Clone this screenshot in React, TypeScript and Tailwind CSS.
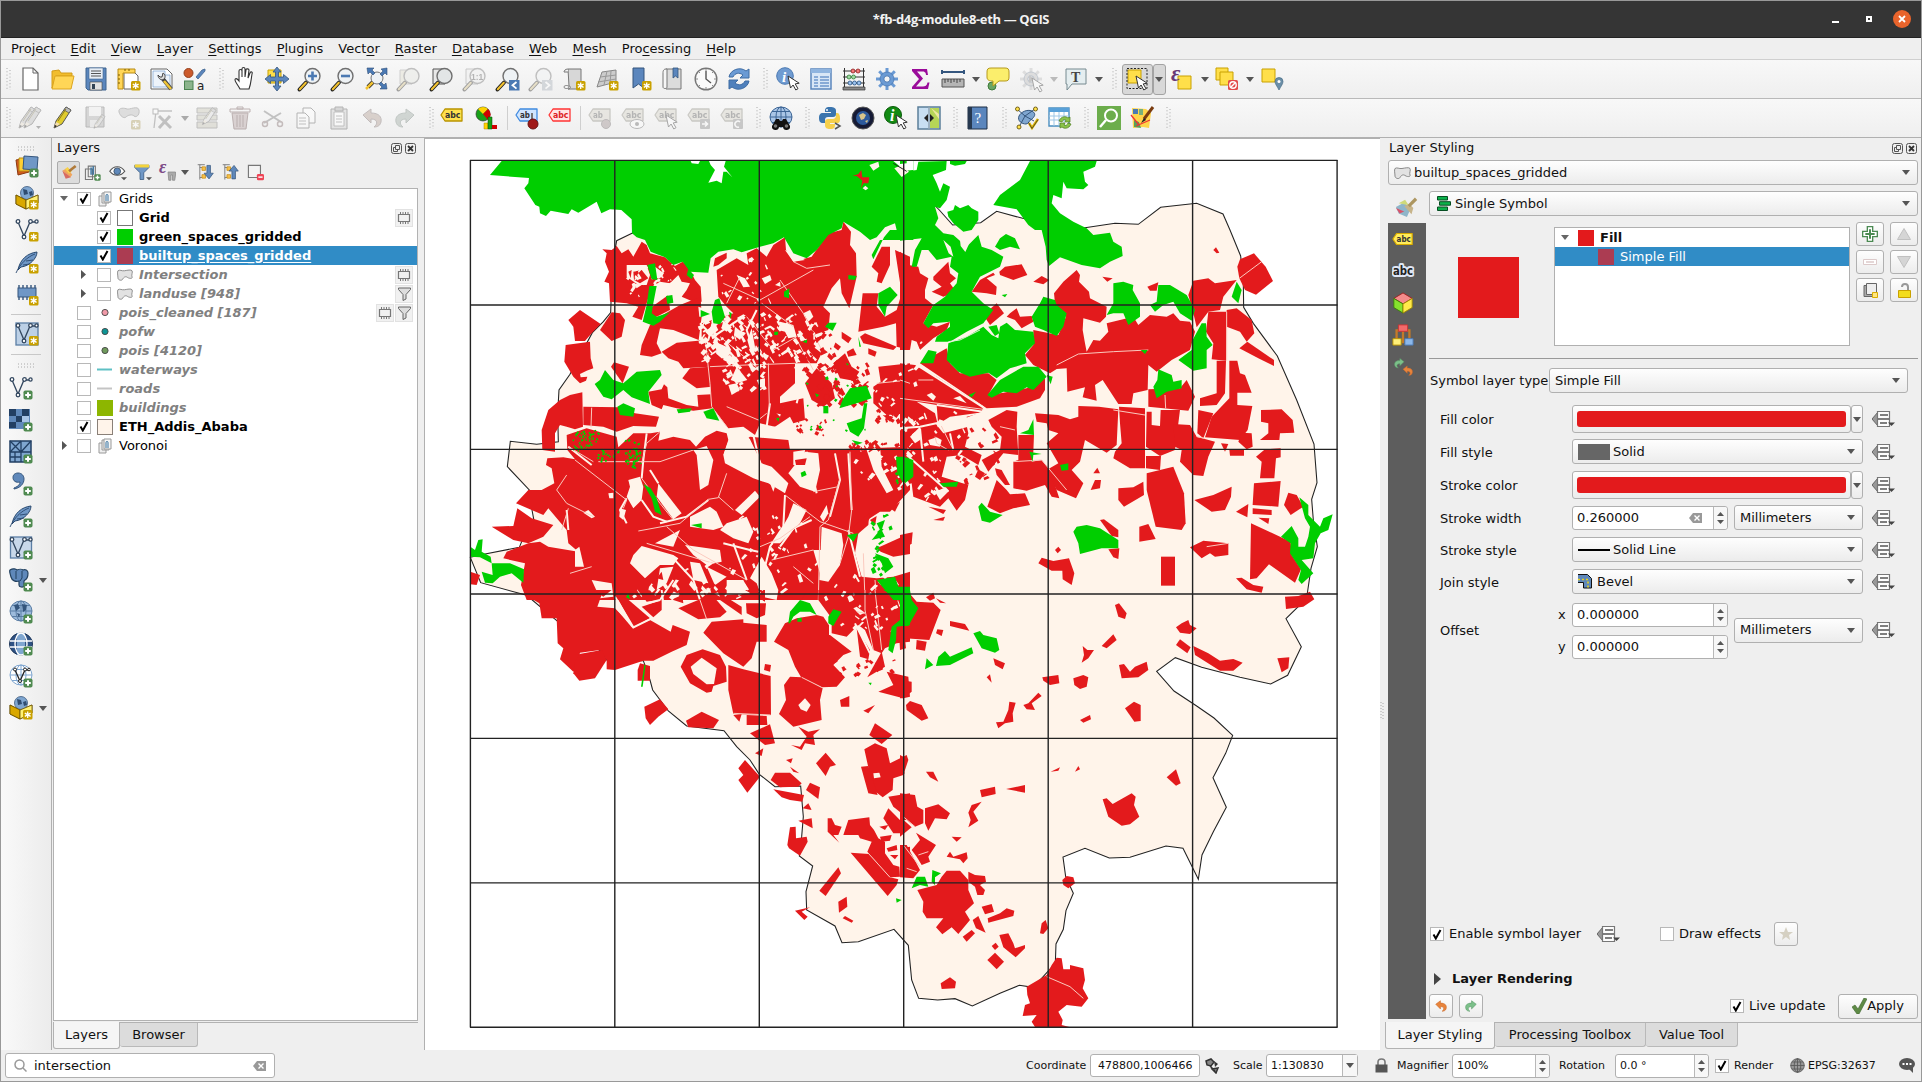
import React from "react";

type Kids = { children?: React.ReactNode };

/* ---------- shared drawing helpers ---------- */

function Ic({ children, s = 24, vb = "0 0 24 24", dim }: Kids & { s?: number; vb?: string; dim?: boolean }) {
  return (
    <svg width={s} height={s} viewBox={vb} fill="none" className={dim ? "shrink-0 overflow-visible opacity-40 grayscale-[60%]" : "shrink-0 overflow-visible"}>
      {children}
    </svg>
  );
}

const NewBadge = () => (
  <g>
    <rect x="14" y="14" width="9.5" height="9.5" rx="1.5" fill="#c9a100" />
    <path d="M18.7 15.5v6.5M15.8 17.1l5.8 3.3M15.8 20.4l5.8-3.3" stroke="#fff" strokeWidth="1.3" />
  </g>
);
const PlusBadge = () => (
  <g>
    <rect x="14.5" y="14.5" width="9" height="9" rx="1.8" fill="#4f8a50" />
    <path d="M19 16.2v5.6M16.2 19h5.6" stroke="#fff" strokeWidth="2" />
  </g>
);
const Cursor = ({ x = 12, y = 9 }: { x?: number; y?: number }) => (
  <path transform={`translate(${x} ${y})`} d="M0 0l2.500 12 2.600-3 2.700 5 2.200-1.300-2.800-4.800 4-.700z" fill="#fff" stroke="#333" strokeWidth="1" />
);
const Lens = ({ fill = "#eef2f5" }: { fill?: string }) => (
  <g>
    <path d="M1.500 22.500l6.500-7" stroke="#222" strokeWidth="4" strokeLinecap="round" />
    <path d="M1.800 22.200l6-6.400" stroke="#f2c230" strokeWidth="2" strokeLinecap="round" />
    <circle cx="14.5" cy="9" r="7.5" fill={fill} stroke="#6f6f6f" strokeWidth="1.4" />
  </g>
);
const Feather = () => (
  <g>
    <path d="M3 20C5 9 13 3 22 2c0 6-7 14-16 15z" fill="#6f97c6" stroke="#2b4a6f" />
    <path d="M1 23C5 14 12 7 20 4M8 15l7-1M11 11l7-1" stroke="#2b4a6f" strokeWidth=".9" />
  </g>
);
const VNodes = () => (
  <g stroke="#33475f" strokeWidth="1.3">
    <path d="M3 4l6 14L15 4h6" />
    <g fill="#fff">
      <circle cx="3" cy="3.5" r="1.8" /><circle cx="9" cy="19" r="1.8" /><circle cx="15.5" cy="3.5" r="1.8" /><circle cx="21.5" cy="3.5" r="1.6" />
    </g>
  </g>
);
const Globe = ({ f = "#a9c5e6", l = "#3c6595" }: { f?: string; l?: string }) => (
  <g stroke={l} strokeWidth="1">
    <ellipse cx="12" cy="11" rx="11" ry="10" fill={f} />
    <ellipse cx="12" cy="11" rx="5" ry="10" /><path d="M1 11h22M3 5.500h18M3 16.500h18M12 1v20" />
  </g>
);
const Box = () => (
  <g stroke="#6b5200" strokeWidth=".8">
    <path d="M1 9l10 5 12-5v8l-12 6L1 18z" fill="#d9a800" />
    <circle cx="12" cy="7" r="6.5" fill="#7fa6d0" stroke="#3c5a7d" />
    <path d="M8 3l4 1 1 4-4 1zM14 6l3-1 1 4-3 1z" fill="#2f4c70" stroke="none" />
    <path d="M1 9l10 5v9L1 18z" fill="#d9a800" /><path d="M23 9l-12 5v9l12-6z" fill="#fff176" />
  </g>
);
const Tag = ({ f, s, t = "#333", txt = "abc" }: { f: string; s: string; t?: string; txt?: string }) => (
  <g>
    <path d="M1 9l4-6h17v12H5z" fill={f} stroke={s} strokeWidth="1.3" strokeLinejoin="round" />
    <text x="5" y="12" fontSize="9" fontWeight="700" fill={t} fontFamily="DejaVu Sans" textLength={txt.length === 2 ? 10 : 15.5} lengthAdjust="spacingAndGlyphs">{txt}</text>
  </g>
);
const Page = () => <path d="M5 1h10l5 5v17H5z" fill="#fff" stroke="#666" strokeWidth="1.2" />;
const Pencil = ({ f = "#e0cb2e" }: { f?: string }) => (
  <g><path d="M3 22l2-7L15 1l5 3-9 14z" fill={f} stroke="#555" /><path d="M15 1l5 3-2 3-5-3z" fill="#bbb" stroke="#555" strokeWidth=".7" /><path d="M3 22l2-6 4 2z" fill="#f5dfb0" /><path d="M3 22l1-3 2 1z" fill="#222" /><path d="M7 15l8-12" stroke="#8d7b1c" /></g>
);
const Gear = ({ f = "#6a9ad4" }: { f?: string }) => (
  <g>
    <g stroke={f} strokeWidth="3"><path d="M12 1v22M1 12h22M4.200 4.200l15.600 15.600M19.800 4.200L4.200 19.800" /></g>
    <circle cx="12" cy="12" r="7" fill={f} stroke="#4a79b3" strokeWidth=".8" /><circle cx="12" cy="12" r="3.2" fill="#f4f4f4" stroke="#4a79b3" />
  </g>
);

function Arrow({ c = "#555" }: { c?: string }) {
  return <svg width="8" height="5" viewBox="0 0 8 5" className="shrink-0"><path d="M0 0h8L4 5z" fill={c} /></svg>;
}
const Cell = ({ children }: Kids) => <div className="flex h-full w-[33px] shrink-0 items-center justify-center">{children}</div>;
const Drop = ({ c }: { c?: string }) => <div className="flex h-full w-3 shrink-0 items-center justify-center"><Arrow c={c} /></div>;
const Dots = () => (
  <svg width="5" height="22" viewBox="0 0 5 22"><path d="M1 0v22M4 2v22" stroke="#aaa" strokeWidth="1" strokeDasharray="1 2.3" /></svg>
);
const Handle = () => <div className="flex h-full w-4 shrink-0 items-center justify-center pl-1"><Dots /></div>;
const VSep = () => <div className="mx-[3px] h-6 w-px shrink-0 bg-[#cfcfcf]" />;

/* ---------- toolbars ---------- */

function TopBar() {
  return (
    <div className="flex h-[39px] shrink-0 items-center border-b border-[#b9b9b9] bg-gradient-to-b from-[#f8f8f8] to-[#efefef]">
      <div className="flex h-full w-[12.5px] items-center pl-[5px]"><Dots /></div>
      <Cell><Ic><Page /><path d="M15 1v5h5" stroke="#666" /></Ic></Cell>
      <Cell><Ic><path d="M1 4l7-1 2 3h11v3H5l-4 12z" fill="#f1bd2d" stroke="#d39c1a" /><path d="M4 9h19l-3 13H1z" fill="#ffd657" stroke="#dca51f" /></Ic></Cell>
      <Cell><Ic><path d="M2 1h20v22H4l-2-2z" fill="#5b86bd" stroke="#3f6590" /><path d="M5 1h14v11H5z" fill="#e8eef5" stroke="#3f6590" strokeWidth=".6" /><path d="M7 4h10M7 6.500h10M7 9h10" stroke="#555" /><path d="M6 15h12v8H6z" fill="#e3e3e3" stroke="#444" strokeWidth=".6" /><path d="M8 17h3v5H8z" fill="#345" /></Ic></Cell>
      <Cell><Ic><path d="M7 5h10l4 4v13H7z" fill="#fff" stroke="#666" /><path d="M1 2h17v4H6v16H1z" fill="#ffd657" stroke="#b98b12" /><path d="M1 8h2M1 12h2M1 16h2M8 2v2M12 2v2" stroke="#7a5b00" /><NewBadge /></Ic></Cell>
      <Cell><Ic><path d="M1 2h16l5 5v15H1z" fill="#fff" stroke="#666" /><path d="M3 4h12v4h5v12H3z" fill="#edf3fa" stroke="#7aa2d0" strokeWidth=".7" /><path d="M13 12l8 10" stroke="#444" strokeWidth="4" /><path d="M14 14l7 8" stroke="#f0c534" strokeWidth="2.500" /><path d="M8 8c0 4 4 6 6 4s1-5-1-6l-1 4-2 0z" fill="#ddd" stroke="#444" /></Ic></Cell>
      <Cell><Ic><circle cx="5.500" cy="6" r="4.500" fill="#cc5a2b" stroke="#96401c" /><path d="M22 2l-3 1-6 7 2 2 7-8z" fill="#5b86bd" stroke="#3f6590" strokeWidth=".8" /><rect x="1.500" y="14" width="8.500" height="8.500" fill="#8cb48c" stroke="#4b8350" /><text x="14" y="22.500" fontSize="12" fill="#222" fontFamily="DejaVu Sans">a</text></Ic></Cell>
      <Handle />
      <Cell><Ic><path d="M8 22C6 18 3 15 3 13c0-2 2-2 4 1V4c0-2 3-2 3 0v6-8c0-2 3-2 3 0v8l1-7c0-2 3-1 3 0l-1 8 2-5c1-2 3-1 2 1-1 6-1 10-3 15z" fill="#fff" stroke="#333" strokeWidth="1.1" /></Ic></Cell>
      <Cell><Ic><path d="M3 3h13v13H3z" fill="#ffdf4a" stroke="#c9a100" /><path d="M12 0l4 5h-2.500v5h5V7.500L24 12l-5.500 4.500V14h-5v5H16l-4 5-4-5h2.500v-5h-5v2.500L0 12l5.500-4.500V10h5V5H8z" fill="#5b86bd" stroke="#34557c" strokeWidth=".8" /></Ic></Cell>
      <Cell><Ic><Lens /><path d="M14.500 4.500v9M10 9h9" stroke="#4a79b3" strokeWidth="2.600" /></Ic></Cell>
      <Cell><Ic><Lens /><path d="M10 9h9" stroke="#4a79b3" strokeWidth="2.600" /></Ic></Cell>
      <Cell><Ic><path d="M4 20l6-6" stroke="#222" strokeWidth="4" /><path d="M2 22l7-7" stroke="#f2c230" strokeWidth="2.500" /><circle cx="13" cy="11" r="6" fill="#eef2f5" stroke="#777" /><path d="M3 1h7L8 3l3 3-2 2-3-3-2 2zM23 1v7l-2-2-3 3-2-2 3-3-2-2zM23 22h-7l2-2-3-3 2-2 3 3 2-2z" fill="#4a79b3" stroke="#2f4f78" strokeWidth=".6" /></Ic></Cell>
      <Cell><Ic dim><path d="M3 3h12v14H3z" fill="#e5dfb0" stroke="#999" /><Lens fill="#e6e8d9" /></Ic></Cell>
      <Cell><Ic><path d="M3 2h12v15H3z" fill="#e8e8e8" stroke="#555" /><Lens fill="#e2e5e6" /></Ic></Cell>
      <Cell><Ic dim><path d="M3 2h12v15H3z" fill="#eee" stroke="#888" /><Lens fill="#eee" /><text x="8" y="12.500" fontSize="8.500" fontWeight="700" fill="#555" fontFamily="Liberation Sans">1:1</text></Ic></Cell>
      <Cell><Ic><Lens /><rect x="13" y="13" width="10.500" height="10.500" fill="#4a79b3" /><path d="M20.500 15l-4 3.300 4 3.300" stroke="#fff" strokeWidth="1.800" /></Ic></Cell>
      <Cell><Ic dim><Lens /><rect x="13" y="13" width="10.500" height="10.500" fill="#9db0c8" /><path d="M16.500 15l4 3.300-4 3.300" stroke="#fff" strokeWidth="1.800" /></Ic></Cell>
      <Cell><Ic><path d="M6 2h13v20H6c3 0 3-3 1-3z" fill="#d7d7d7" stroke="#777" /><path d="M6 2c-3 0-4 2-4 3h4M2 20c0-2 5-2 5 0s-5 2-5 0z" fill="#f4f4f4" stroke="#777" /><NewBadge /></Ic></Cell>
      <Cell><Ic><path d="M7 5l14-2v12L2 20z" fill="#ccc" stroke="#888" /><path d="M5 10l16-2M3 15l18-3M12 4l-3 14M16 4l-1 13" stroke="#999" /><NewBadge /></Ic></Cell>
      <Cell><Ic><path d="M5 1h11v20l-5.500-4L5 21z" fill="#5b86bd" stroke="#34557c" /><NewBadge /></Ic></Cell>
      <Cell><Ic><path d="M5 2h15v20H5z" fill="#dcdcdc" stroke="#777" /><path d="M5 2c-3 0-3 3-3 4v14c0 2 4 2 4 0V2z" fill="#f6f6f6" stroke="#777" /><path d="M12 1h5v10l-2.500-2L12 11z" fill="#5b86bd" stroke="#34557c" strokeWidth=".8" /></Ic></Cell>
      <Cell><Ic><circle cx="12" cy="12" r="10.800" fill="#fafafa" stroke="#777" strokeWidth="1.400" /><path d="M12 4v8l5 4" stroke="#555" strokeWidth="1.400" /><path d="M12 2v2M12 20v2M2 12h2M20 12h2M5 5l1 1M18 18l1 1M5 19l1-1M18 6l1-1" stroke="#888" /></Ic></Cell>
      <Cell><Ic><path d="M2 10C3 3 13-1 19 4l3-2v9h-9l3-3C12 5 8 6 6 10z" fill="#6a9ad4" stroke="#3f6ca3" /><path d="M22 14c-1 7-11 11-17 6l-3 2v-9h9l-3 3c4 3 8 2 10-2z" fill="#4f80bc" stroke="#3f6ca3" /></Ic></Cell>
      <Handle />
      <Cell><Ic><circle cx="9" cy="9" r="8.300" fill="#6f9bd1" stroke="#4a79b3" /><text x="6" y="14.500" fontSize="15" fontStyle="italic" fontWeight="700" fill="#fff" fontFamily="Liberation Serif">i</text><Cursor x={12} y={9} /></Ic></Cell>
      <Cell><Ic><path d="M2 2h20v20H2z" fill="#d8e6f6" stroke="#5b86bd" strokeWidth="1.500" /><path d="M2 2h20v4H2z" fill="#8fb4df" /><path d="M5 10h4M11 10h9M5 13h4M11 13h9M5 16h4M11 16h9M5 19h4M11 19h9" stroke="#6d97cb" strokeWidth="1.300" /></Ic></Cell>
      <Cell><Ic><path d="M2.500 1v20M21.500 1v20M1 4h22M1 10h22M1 16h22" stroke="#333" /><path d="M1 20h22v3H1z" fill="#888" stroke="#333" strokeWidth=".7" /><g stroke="#8b1a1a" fill="#f47a7a" strokeWidth=".8"><circle cx="11" cy="4" r="2" /><circle cx="16" cy="4" r="2" /></g><g stroke="#2e7d32" fill="#9fd8a2" strokeWidth=".8"><circle cx="7" cy="10" r="2" /><circle cx="11.500" cy="10" r="2" /></g><g stroke="#27507f" fill="#9cc3ef" strokeWidth=".8"><circle cx="8" cy="16" r="2" /><circle cx="12.500" cy="16" r="2" /><circle cx="17" cy="16" r="2" /></g></Ic></Cell>
      <Cell><Ic><Gear /></Ic></Cell>
      <Cell><Ic><path d="M4 2h15l1 6h-2c0-3-2-3.500-4-3.500H9l6 7-7 8h7c2 0 4-1 4.500-4h2L20 22H4v-2l7-8-7-8z" fill="#9a0b9a" /></Ic></Cell>
      <Cell><Ic><path d="M1 5h22M1 3v4M23 3v4" stroke="#35577f" strokeWidth="2" /><path d="M1 12h22v8H1z" fill="#b5b5b5" stroke="#555" /><path d="M4 12v4M7 12v3M10 12v4M13 12v3M16 12v4M19 12v3" stroke="#444" /></Ic></Cell>
      <Drop />
      <Cell><Ic><circle cx="6" cy="19" r="4" fill="#69a564" stroke="#3d7a3a" /><path d="M5 1h14c3 0 4 1 4 4v5c0 3-1 4-4 4h-6l-6 5v-5C3 14 1 13 1 10V5c0-3 1-4 4-4z" fill="#fbee6c" stroke="#b69a1c" /></Ic></Cell>
      <Cell><Ic dim><Gear f="#bbb" /><path d="M10 8l6 4-6 4z" fill="#888" /><Cursor x={13} y={11} /></Ic></Cell>
      <Drop c="#bbb" />
      <Cell><Ic><path d="M2 2h20v15H8l-5 6v-6H2z" fill="#e5eef0" stroke="#768a90" /><text x="7" y="14.500" fontSize="14" fontWeight="700" fill="#444" fontFamily="Liberation Serif">T</text></Ic></Cell>
      <Drop />
      <Handle />
      <div className="ml-px flex h-[31px] w-[31px] shrink-0 items-center justify-center rounded-[3px] border border-[#a3a3a3] bg-[#d8d8d8]"><Ic><path d="M3 3h13v13H3z" fill="#ffdf4a" stroke="#c9a100" /><path d="M2 1.500h20v20H2z" stroke="#222" strokeDasharray="2 1.500" /><Cursor x={11} y={9} /></Ic></div>
      <div className="flex h-[31px] w-[13px] shrink-0 items-center justify-center rounded-[3px] border border-[#a3a3a3] bg-[#d8d8d8]"><Arrow /></div>
      <Cell><Ic><path d="M8 9h13v13H8z" fill="#ffdf4a" stroke="#c9a100" /><text x="1" y="14" fontSize="23" fontStyle="italic" fontWeight="700" fill="#6a3a78" fontFamily="Liberation Serif">ε</text></Ic></Cell>
      <Drop />
      <Cell><Ic><path d="M1 1h12v12H1z" fill="#ffdf4a" stroke="#c9a100" /><path d="M5 5h13v13H5z" fill="#ffdf4a" stroke="#c9a100" /><rect x="13" y="13" width="10" height="10" rx="1.500" fill="#e24b4b" /><circle cx="18" cy="18" r="3.200" stroke="#fff" strokeWidth="1.400" /><path d="M16 20l4-4" stroke="#fff" strokeWidth="1.400" /></Ic></Cell>
      <Drop />
      <Cell><Ic><path d="M2 2h13v13H2z" fill="#ffdf4a" stroke="#c9a100" /><path d="M19 23c-2-4-4-6-4-8.500a4 4 0 018 0C23 17 21 19 19 23z" fill="#6b8fa8" stroke="#486b85" strokeWidth=".7" /><circle cx="19" cy="14.500" r="1.500" fill="#fff" /></Ic></Cell>
    </div>
  );
}

function EditBar() {
  const grey = { f: "#d9d2b0", s: "#8d886f", t: "#555" };
  return (
    <div className="flex h-[39px] shrink-0 items-center border-b border-[#b0b0b0] bg-gradient-to-b from-[#f8f8f8] to-[#efefef]">
      <div className="flex h-full w-[12.5px] items-center pl-[5px]"><Dots /></div>
      <Cell><Ic dim><g transform="translate(-2 0)"><Pencil f="#bbb" /></g><g transform="translate(3 0)"><Pencil f="#bbb" /></g><path d="M18 20h5l-2.500 3z" fill="#555" /></Ic></Cell>
      <Cell><Ic><Pencil /></Ic></Cell>
      <Cell><Ic dim><path d="M2 1h18v20H2z" fill="#aaa" stroke="#666" /><path d="M5 1h12v9H5z" fill="#eee" /><path d="M6 14h8v7H6z" fill="#ddd" /><g transform="translate(8 8) scale(.65)"><Pencil f="#ccc" /></g></Ic></Cell>
      <Cell><Ic dim><path d="M2 6c-1-5 6-4 8-3s11-4 12 1-3 8-5 6-6-1-8 1-6-1-7-5z" fill="#bbb" stroke="#777" /><NewBadge /></Ic></Cell>
      <Cell><Ic dim><path d="M4 22L6 5h16" stroke="#777" strokeWidth="1.300" /><rect x="3" y="3" width="5" height="5" fill="#fff" stroke="#666" /><path d="M9 10l12 12M20 10L9 22" stroke="#777" strokeWidth="3" /></Ic></Cell>
      <Drop c="#aaa" />
      <Cell><Ic dim><path d="M2 2h20v5H2zM2 9h20v5H2zM2 16h20v6H2z" fill="#c9c79b" stroke="#777" /><g transform="translate(5 1) scale(.8)"><Pencil f="#ddd" /></g></Ic></Cell>
      <Cell><Ic dim><path d="M4 7h16l-2 16H6z" fill="#c99" stroke="#844" /><path d="M2 3h20v3H2zM9 1h6v2H9zM9 9v12M12 9v12M15 9v12" stroke="#844" /></Ic></Cell>
      <Cell><Ic dim><path d="M3 5l17 11M3 17L20 7" stroke="#777" strokeWidth="2" /><circle cx="19" cy="18" r="2.500" stroke="#966" strokeWidth="1.500" /><circle cx="4" cy="18" r="2.500" stroke="#966" strokeWidth="1.500" /></Ic></Cell>
      <Cell><Ic dim><path d="M9 2h8l4 4v11H9z" fill="#fff" stroke="#555" /><path d="M3 7h8l4 4v11H3z" fill="#fff" stroke="#555" /><path d="M5 12h7M5 15h7M5 18h7" stroke="#777" /></Ic></Cell>
      <Cell><Ic dim><path d="M4 3h16v20H4z" fill="#ccc" stroke="#555" /><path d="M7 6h10v14H7z" fill="#fff" stroke="#777" /><path d="M8 1h8v4H8z" fill="#aaa" stroke="#555" /><path d="M9 10h6M9 13h6M9 16h6" stroke="#777" /></Ic></Cell>
      <Cell><Ic dim><path d="M3 9l8-6v4c8 0 11 4 10 9s-6 5-7 5c4-3 4-8-3-8v4z" fill="#c9967a" stroke="#866" /></Ic></Cell>
      <Cell><Ic dim><path d="M21 9l-8-6v4C5 7 2 11 3 16s6 5 7 5c-4-3-4-8 3-8v4z" fill="#8fae9a" stroke="#687" /></Ic></Cell>
      <Handle />
      <Cell><Ic><g transform="translate(-2 0)"><Tag f="#ffe14d" s="#b99400" /></g></Ic></Cell>
      <Cell><Ic><circle cx="8" cy="8" r="7" fill="#18a018" stroke="#333" strokeWidth=".7" /><path d="M8 8L3 3a7 7 0 0110 0z" fill="#ffd200" /><path d="M8 8l5-5a7 7 0 010 11z" fill="#d00000" /><path d="M9 17h4v6H9z" fill="#ffd200" stroke="#a80" strokeWidth=".5" /><path d="M13 11h4v12h-4z" fill="#18a018" stroke="#040" strokeWidth=".5" /><path d="M17 19h5v4h-5z" fill="#d00000" /></Ic></Cell>
      <VSep />
      <Cell><Ic><Tag f="#cfe5ff" s="#3f8ae0" txt="ab" /><path d="M17 7v9" stroke="#777" strokeWidth="2" /><circle cx="18" cy="18" r="5" fill="#a01818" stroke="#611" /></Ic></Cell>
      <Cell><Ic><Tag f="#ffe5e5" s="#f33" t="#d22" /></Ic></Cell>
      <VSep />
      <Cell><Ic dim><Tag {...grey} txt="ab" /><circle cx="18" cy="18" r="4.500" fill="#a88" stroke="#766" /></Ic></Cell>
      <Cell><Ic dim><Tag {...grey} /><ellipse cx="16" cy="18" rx="7" ry="4.500" fill="#fff" stroke="#666" /><circle cx="16" cy="18" r="2" fill="#666" /></Ic></Cell>
      <Cell><Ic dim><Tag {...grey} /><Cursor x={12} y={9} /></Ic></Cell>
      <Cell><Ic dim><Tag {...grey} /><rect x="13" y="13" width="10" height="10" rx="1" fill="#888" /><path d="M15 18h5M18 15.500l2.500 2.500-2.500 2.500" stroke="#fff" strokeWidth="1.600" /></Ic></Cell>
      <Cell><Ic dim><Tag {...grey} /><rect x="13" y="13" width="10" height="10" rx="1" fill="#888" /><path d="M20 16a3 3 0 10-1 5" stroke="#fff" strokeWidth="1.500" /></Ic></Cell>
      <Handle />
      <Cell><Ic><Globe /><path d="M7 13h3l1 2h2l1-2h3l4 7a3.500 3.500 0 01-7 1h-4a3.500 3.500 0 01-7-1z" fill="#111" /><circle cx="6.500" cy="20" r="1.800" fill="#777" /><circle cx="17.500" cy="20" r="1.800" fill="#777" /></Ic></Cell>
      <Handle />
      <Cell><Ic><path d="M12 1c-5 0-5 2-5 5h6v1H5c-3 0-4 2-4 5s1 5 4 5h2v-3c0-2 1-3 3-3h5c2 0 3-1 3-3V5c0-3-2-4-6-4z" fill="#3b75ae" /><path d="M12 23c5 0 5-2 5-5h-5v-1h7c3 0 3-2 3-5s-1-5-3-5h-1v3c0 2-2 3-3 3h-5c-2 0-3 1-3 3v3c0 3 2 4 5 4z" fill="#f6d04c" /><circle cx="9" cy="4" r="1" fill="#fff" /><path d="M17 17l5 3-5 3" stroke="#555" strokeWidth="1.500" /></Ic></Cell>
      <Cell><Ic><circle cx="12" cy="12" r="11" fill="#151a35" stroke="#555" /><circle cx="12" cy="12" r="7" fill="#2d5a9c" /><path d="M8 9l4-2 3 2-2 4-3 1zM14 15l3-1-1 3z" fill="#d9c68c" /></Ic></Cell>
      <Cell><Ic><circle cx="9" cy="9" r="8.500" fill="#128a12" stroke="#0a5c0a" /><text x="6" y="15" fontSize="16" fontStyle="italic" fontWeight="700" fill="#fff" fontFamily="Liberation Serif">i</text><Cursor x={12} y={9} /></Ic></Cell>
      <Cell><Ic><path d="M1 1h22v22H1z" fill="#c8dff2" stroke="#5b7f99" strokeWidth="1.500" /><path d="M13 2h9v20h-9z" fill="#b6d557" /><path d="M14 2l8 6v5z" fill="#eee8a0" /><path d="M12 1v22" stroke="#8fa3b2" strokeWidth="1.500" /><path d="M7 12l4-4v8zM17 12l-4-4v8z" fill="#222" /></Ic></Cell>
      <Handle />
      <Cell><Ic><path d="M2 1h19v22H2z" fill="#5b86bd" stroke="#1e2f45" /><path d="M2 1h4v22H2z" fill="#26384f" /><text x="8.500" y="17" fontSize="15" fill="#fff" fontFamily="Liberation Serif">?</text></Ic></Cell>
      <Handle />
      <Cell><Ic><path d="M4 10c2-4 8-7 13-5 5 3 2 6 0 8-3 1-3 5-6 5-4 0-9-3-7-8z" fill="#7fa6d0" stroke="#34557c" /><path d="M2 3l8 7L20 3M4 21l6-11 9 5" stroke="#34557c" /><g fill="#ffe14d" stroke="#554400" strokeWidth=".8"><circle cx="2.500" cy="3" r="2" /><circle cx="20.500" cy="3" r="2" /><circle cx="4" cy="21" r="2" /></g><path d="M14 17l3 5 6-9" stroke="#e0b800" strokeWidth="2.500" /><path d="M13.500 16.500l3.500 6 6-9" stroke="#333" strokeWidth=".8" /></Ic></Cell>
      <Cell><Ic><path d="M1 2h20v18H1z" fill="#fff" stroke="#4a8ec0" strokeWidth="1.400" /><path d="M1 2h20v4H1z" fill="#58a0d8" /><path d="M1 10h20M1 14h20M6 6v14M11 6v14M16 6v14" stroke="#9dc6e6" /><path d="M11 15c2-5 7-5 9-3l2-1v5h-5l1-2c-2-1-3 0-4 2zM23 18c-2 5-7 5-9 3l-2 1v-5h5l-1 2c2 1 3 0 4-2z" fill="#8bc34a" stroke="#4c7d1c" strokeWidth=".7" /></Ic></Cell>
      <Handle />
      <Cell><Ic><path d="M0 0h24v24H0z" fill="#6cad4c" /><circle cx="14" cy="9.500" r="6" stroke="#fff" strokeWidth="2" /><path d="M3 21l6-7" stroke="#fff" strokeWidth="2.400" /></Ic></Cell>
      <Cell><Ic><path d="M2 2l14 1 5 4-2 15-6-1-10 1z" fill="#ffd54a" /><path d="M3 3h5v5H3z" fill="#4a79b3" /><path d="M4 14l5 2 2 6-7-1z" fill="#58a05a" /><path d="M9 3h4v6H9z" fill="#78b07a" /><path d="M1 9l8 10M6 20l14-6" stroke="#e33" strokeWidth="1.300" /><path d="M23 1l-9 12" stroke="#7a3c10" strokeWidth="3" /><path d="M14 12l-3 5 5-3z" fill="#222" /></Ic></Cell>
      <Handle />
    </div>
  );
}

const SideCell = ({ children, more }: Kids & { more?: boolean }) => (
  <div className="flex h-8 shrink-0 items-center">
    <div className="ml-[8px] flex w-6 justify-center">{children}</div>
    {more && <div className="ml-[6px]"><Arrow /></div>}
  </div>
);
const HDots = () => <svg width="17" height="5" viewBox="0 0 17 5"><path d="M0 1h17M0 4h17" stroke="#aaa" strokeDasharray="1 2" /></svg>;

function SideBar() {
  return (
    <div className="flex w-[51px] shrink-0 flex-col border-r border-[#b0b0b0] bg-gradient-to-r from-[#f9f9f9] to-[#ececec]">
      <div className="flex h-[12px] items-center justify-center pt-2"><HDots /></div>
      <div className="pl-[6px]">
        <SideCell><Ic><path d="M1 6l11-2 2 14-11 3z" fill="#cf5a1c" stroke="#8c3a10" /><path d="M4 4h13v13H4z" fill="#ffcf33" stroke="#b98b12" /><path d="M9 2l14 1-1 13-14-1z" fill="#6f97c6" stroke="#34557c" /><PlusBadge /></Ic></SideCell>
        <SideCell><Ic><Box /><NewBadge /></Ic></SideCell>
        <SideCell><Ic><VNodes /><NewBadge /></Ic></SideCell>
        <SideCell><Ic><Feather /><NewBadge /></Ic></SideCell>
        <SideCell><Ic><path d="M4 3v15M8 3v15M12 3v15M16 3v15M20 3v15" stroke="#34557c" strokeWidth="1.400" /><rect x="3" y="6" width="18" height="9" fill="#6f97c6" stroke="#34557c" /><NewBadge /></Ic></SideCell>
      </div>
      <div className="mx-[10px] my-[3.5px] h-px shrink-0 bg-[#c8c8c8]" />
      <div className="pl-[6px]"><SideCell><Ic><rect x="1" y="1" width="22" height="22" fill="#bcd0e6" stroke="#5b7ea5" strokeWidth="1.300" /><VNodes /><NewBadge /></Ic></SideCell></div>
      <div className="mx-[10px] my-[3.5px] h-px shrink-0 bg-[#c8c8c8]" />
      <div className="flex h-[14px] shrink-0 items-center justify-center"><HDots /></div>
      <SideCell><Ic><VNodes /><PlusBadge /></Ic></SideCell>
      <SideCell><Ic><path d="M0 1h21v20H0z" fill="#5f88ba" /><path d="M0 1h7v7H0zM13 1h7v7h-7zM7 8h6v6H7zM0 14h7v6H0z" fill="#223f63" /><path d="M13 8h7v6h-7z" fill="#a9c5e6" /><PlusBadge /></Ic></SideCell>
      <SideCell><Ic><path d="M1 1h21v21H1z" fill="#7fa6d0" stroke="#223f63" strokeWidth="1.500" /><path d="M1 12h21M12 1v21M1 1l11 11M12 1L1 12M12 12L22 1M1 17h11M6 12v10" stroke="#223f63" strokeWidth="1.300" /><PlusBadge /></Ic></SideCell>
      <SideCell><Ic><path d="M5 16c5-2 6-4 6-6-4 1-7-1-7-4.500C4 2 7 1 9 1c4 0 6 3 6 6 0 5-4 9-10 10z" fill="#5f88ba" stroke="#34557c" /><PlusBadge /></Ic></SideCell>
      <SideCell><Ic><Feather /><PlusBadge /></Ic></SideCell>
      <SideCell><Ic><rect x="1.500" y="1" width="21" height="21" fill="#c8d8ea" stroke="#5b7ea5" strokeWidth="1.300" /><VNodes /><PlusBadge /></Ic></SideCell>
      <SideCell more><Ic><path d="M1 2c3-2 6-1 7 0 2-1 5-1 6 0 2-1 5 0 5 3s-1 6-3 7l-1 1v5c-1 2-5 1-5-1v-4c-3 1-7 0-8-4S0 3 1 2z" fill="#5f88ba" stroke="#23415f" strokeWidth="1.200" /><path d="M7 3v8M13 3v7l-2 3" stroke="#23415f" /><PlusBadge /></Ic></SideCell>
      <SideCell><Ic><Globe f="#9dbbdc" l="#5b7ea5" /><path d="M5 5l4-1 2 4-4 3zM13 4l5 1-1 5-3 2zM8 13l3 1-1 4z" fill="#34557c" /><PlusBadge /></Ic></SideCell>
      <SideCell><Ic><ellipse cx="12" cy="12" rx="11.500" ry="11" fill="#2f5284" stroke="#1d3557" /><path d="M8 1h8v22H8z" fill="#7fa6d0" /><path d="M1 9h22M1 15h22" stroke="#fff" strokeWidth="1.400" /><ellipse cx="12" cy="12" rx="6" ry="11" stroke="#fff" strokeWidth="1.400" /><PlusBadge /></Ic></SideCell>
      <SideCell><Ic><Globe f="#fff" l="#7fa6d0" /><path d="M6 6l5 11L16 6h4" stroke="#222" strokeWidth="1.300" /><g fill="#fff" stroke="#222"><circle cx="6" cy="5.500" r="1.500" /><circle cx="11" cy="17" r="1.500" /><circle cx="16" cy="5.500" r="1.500" /><circle cx="20" cy="5.500" r="1.300" /></g><PlusBadge /></Ic></SideCell>
      <SideCell more><Ic><Box /><NewBadge /></Ic></SideCell>
    </div>
  );
}

/* ---------- small widgets ---------- */

function Check({ on, s = "h-[14px] w-[14px]" }: { on?: boolean; s?: string }) {
  return (
    <span className={`flex shrink-0 items-center justify-center border border-[#b8b8b8] bg-white ${s}`}>
      {on && <svg width="10" height="11" viewBox="0 0 10 11"><path d="M1.500 5.500l2.300 4L8.500 1" fill="none" stroke="#000" strokeWidth="2" /></svg>}
    </span>
  );
}
const PaneButtons = () => (
  <div className="flex gap-[3px]">
    <svg width="11" height="11" viewBox="0 0 11 11" fill="none" stroke="#555"><rect x=".5" y=".5" width="10" height="10" rx="2" /><path d="M4.500 2.500h4v4h-4zM4 4.500H2.500v4h4V7" /></svg>
    <svg width="11" height="11" viewBox="0 0 11 11" fill="none" stroke="#555"><rect x=".5" y=".5" width="10" height="10" rx="2" /><path d="M3 3l5 5M8 3l-5 5" stroke="#333" strokeWidth="1.800" /></svg>
  </div>
);
const GroupIcon = () => (
  <svg width="14" height="16" viewBox="0 0 14 16" fill="none"><path d="M1 5h7v10H1z" stroke="#999" fill="#eee" /><path d="M4 2h7v10H4z" stroke="#999" fill="#eee" /><path d="M6 1h7v10H6z" stroke="#999" fill="#f6f6f6" /><path d="M8 10V4.500a1 1 0 012 0V10" stroke="#34709f" strokeWidth="1" /></svg>
);
const PolyIcon = () => (
  <svg width="17" height="12" viewBox="0 0 17 12"><path d="M1 1.500c2-1.500 4 .5 7 0s7-1.500 8 0-1 4.500 0 6.500-3 2-5 .500-4 0-5 2-5 1-5-1.500S0 3 1 1.500z" fill="#e2e2e2" stroke="#8a8a8a" /></svg>
);
const Swatch = ({ c }: { c: string }) => <span className={`h-4 w-4 border ${c}`} />;
const MemBox = () => (
  <span className="flex h-[18px] w-[18px] items-center justify-center border border-[#e2e2e2] bg-[#f1f1f1]">
    <svg width="14" height="12" viewBox="0 0 14 12" fill="none" stroke="#777"><path d="M1.500 2.500h11v7h-11z" strokeWidth="1.200" /><path d="M3.500 0v2M6 0v2M8.500 0v2M11 0v2M3.500 10v2M6 10v2M8.500 10v2M11 10v2" /></svg>
  </span>
);
const FunnelBox = () => (
  <span className="flex h-[18px] w-[18px] items-center justify-center border border-[#e2e2e2] bg-[#f1f1f1]">
    <svg width="13" height="14" viewBox="0 0 13 14"><path d="M.5 1h12v1.500L8 7.500V12l-3 1.500v-6L.5 2.500z" fill="#ddd" stroke="#666" /></svg>
  </span>
);
const Expand = ({ open }: { open?: boolean }) =>
  open ? <Arrow c="#666" /> : <svg width="5" height="9" viewBox="0 0 5 9"><path d="M0 0v9l5-4.500z" fill="#555" /></svg>;

/* ---------- layers panel ---------- */

type RowData = { name: string; lvl?: boolean; exp?: "open" | "shut"; on?: boolean; icon: React.ReactNode; kind: "plain" | "bold" | "off" | "sel"; right?: React.ReactNode };
const dot = (c: string) => <svg width="16" height="16" viewBox="0 0 16 16"><circle cx="8" cy="7.500" r="3.100" fill={c} stroke="#444" strokeWidth=".9" /></svg>;
const line = (c: string) => <svg width="16" height="16" viewBox="0 0 16 16"><path d="M0 7.500h15" stroke={c} strokeWidth="2" /></svg>;
const rows: RowData[] = [
  { name: "Grids", exp: "open", on: true, icon: <GroupIcon />, kind: "plain" },
  { name: "Grid", lvl: true, on: true, icon: <Swatch c="border-[#777] bg-white" />, kind: "bold", right: <MemBox /> },
  { name: "green_spaces_gridded", lvl: true, on: true, icon: <Swatch c="border-[#00ce00] bg-[#00ce00]" />, kind: "bold" },
  { name: "builtup_spaces_gridded", lvl: true, on: true, icon: <Swatch c="border-[#ab3c52] bg-[#ab3c52]" />, kind: "sel" },
  { name: "Intersection", lvl: true, exp: "shut", icon: <PolyIcon />, kind: "off", right: <MemBox /> },
  { name: "landuse [948]", lvl: true, exp: "shut", icon: <PolyIcon />, kind: "off", right: <FunnelBox /> },
  { name: "pois_cleaned [187]", icon: dot("#f09aa8"), kind: "off", right: <><MemBox /><FunnelBox /></> },
  { name: "pofw", icon: dot("#0e9595"), kind: "off" },
  { name: "pois [4120]", icon: dot("#6f9a5c"), kind: "off" },
  { name: "waterways", icon: line("#5fc0c4"), kind: "off" },
  { name: "roads", icon: line("#c4c4c4"), kind: "off" },
  { name: "buildings", icon: <Swatch c="border-[#8db600] bg-[#8db600]" />, kind: "off" },
  { name: "ETH_Addis_Ababa", on: true, icon: <Swatch c="border-[#8a8078] bg-[#fff4ea]" />, kind: "bold" },
  { name: "Voronoi", exp: "shut", icon: <GroupIcon />, kind: "plain" },
];
const kindCls = {
  plain: "text-black",
  bold: "font-bold text-black",
  off: "font-bold italic text-[#808080]",
  sel: "font-bold text-white underline underline-offset-2",
};

const MiniCell = ({ children }: Kids) => <div className="flex w-[25px] shrink-0 justify-center">{children}</div>;

function LayersPanel() {
  return (
    <div className="ml-[1px] flex w-[371px] shrink-0 flex-col">
      <div className="flex h-[20px] items-center justify-between pr-[8px] pl-[4px]"><span>Layers</span><PaneButtons /></div>
      <div className="flex h-[30px] items-center pb-[2px] pl-[4px]">
        <div className="flex h-[23px] w-[23px] items-center justify-center rounded-[2px] border border-[#ababab] bg-[#dcdcdc]"><Ic s={16}><path d="M2 10l12 10 3-4-8-10z" fill="#f0a55c" /><path d="M2 10l5 12 8-2z" fill="#d86a60" /><path d="M8 6l6 7" stroke="#f7d24a" strokeWidth="5" /><path d="M12 11l10-8" stroke="#b07a3a" strokeWidth="4" /></Ic></div>
        <MiniCell><Ic s={17}><path d="M2 7h10v15H2zM6 3h10v15H6z" fill="#eee" stroke="#777" strokeWidth="1.500" /><path d="M10 15V5M13 15V3" stroke="#34709f" strokeWidth="2" /><PlusBadge /></Ic></MiniCell>
        <MiniCell><Ic s={18}><path d="M1 11c5-8 15-8 20 0-5 7-15 7-20 0z" fill="#fff" stroke="#555" strokeWidth="1.500" /><circle cx="11" cy="11" r="4.500" fill="#5f88ba" stroke="#345" /><path d="M16 19h8l-4 4z" fill="#555" /></Ic></MiniCell>
        <MiniCell><Ic s={18}><path d="M1 3h19v3l-7 7v9h-5v-9L1 6z" fill="#6f97c6" stroke="#34557c" /><path d="M1 2h19v4H1z" fill="#f3d33c" /><path d="M16 19h8l-4 4z" fill="#555" /></Ic></MiniCell>
        <MiniCell><Ic s={18}><text x="0" y="13" fontSize="24" fontStyle="italic" fontWeight="700" fill="#7d4a86" fontFamily="Liberation Serif">ε</text><path d="M12 12h10v4l-1 7h-3v-7h-2v7h-3z" fill="#aaa" stroke="#888" /></Ic></MiniCell>
        <div className="mr-1 flex w-[9px] justify-center"><Arrow /></div>
        <MiniCell><Ic s={17}><path d="M4 1v21M4 5h6M4 19h6M1 1h10" stroke="#777" strokeWidth="1.300" /><path d="M7 4h5v5H7zM7 15h5v5H7z" fill="#f6c04a" stroke="#c48a12" /><path d="M14 2h5v11h4l-6 8-7-8h4z" fill="#5f88ba" stroke="#34557c" /></Ic></MiniCell>
        <MiniCell><Ic s={17}><path d="M4 1v21M4 5h6M4 19h6M1 1h10" stroke="#777" strokeWidth="1.300" /><path d="M7 4h5v5H7zM7 15h5v5H7z" fill="#f6c04a" stroke="#c48a12" /><path d="M14 21h5V10h4l-6-8-7 8h4z" fill="#5f88ba" stroke="#34557c" /></Ic></MiniCell>
        <MiniCell><Ic s={17}><path d="M2 2h17v17H2z" fill="#f3f3f3" stroke="#777" strokeWidth="1.600" /><rect x="14" y="14" width="10" height="9" rx="2" fill="#ee4455" /><path d="M16 18.500h6" stroke="#fff" strokeWidth="2" /></Ic></MiniCell>
      </div>
      <div className="flex h-[833px] w-[365px] shrink-0 flex-col border border-[#b2b2b2] bg-white">
        {rows.map((r) => (
          <div key={r.name} className={r.kind === "sel" ? "flex h-[19px] shrink-0 items-center bg-[#308cc6]" : "flex h-[19px] shrink-0 items-center"}>
            <div className={r.lvl ? "flex w-[43px] justify-end pr-[11px]" : "flex w-[23px] justify-center pr-[3px]"}>{r.exp && <Expand open={r.exp === "open"} />}</div>
            <Check on={r.on} />
            <div className="ml-[6px] flex w-4 justify-center">{r.icon}</div>
            <span className={`ml-[6px] flex-1 whitespace-nowrap ${kindCls[r.kind]}`}>{r.name}</span>
            <div className="mr-[4px] flex gap-px">{r.right}</div>
          </div>
        ))}
      </div>
      <div className="mt-px flex h-[27px] w-[365px] shrink-0 items-start border-t border-[#b2b2b2]">
        <div className="-mt-px flex h-[27px] w-[67px] items-center justify-center rounded-b-[3px] border border-t-0 border-[#b2b2b2] bg-[#f5f5f5]">Layers</div>
        <div className="flex h-[24px] w-[78px] items-center justify-center rounded-b-[3px] border border-t-0 border-l-0 border-[#b9b9b9] bg-[#dcdcdc]">Browser</div>
      </div>
    </div>
  );
}

/* ---------- map ---------- */

const CREAM = "#fff4ea";
const shift = (s: string, dx: number, dy: number) =>
  s.trim().split(/\s+/).map((p) => { const [x, y] = p.split(",").map(Number); return `${x + dx},${y + dy}`; }).join(" ");

const boundary = [
  shift("516,250 470,272 465,300 463,340 455,400 452,488 430,515 397,548 330,673 297,720 293,790 295,875 230,883 151,874 142,950 210,1022 216,1080 222,1112 185,1175 178,1192 60,1215 31,1222 62,1298 200,1336", 0, 0),
  shift("300,100 422,183 440,210 550,212 570,270 578,300 625,363 680,408 792,422 830,470 870,510 898,553 945,590 1022,588 1030,680 1025,740 1018,798 1058,828 1038,905 1040,960 1125,1008 1146,1058 1195,1055 1302,1018 1345,1066", 0, 1320),
  shift("35,1170 56,1225 113,1230 165,1226 217,1248 300,1210 358,1186 400,1192 466,1120 468,1062 490,1018 498,962 520,910 497,860 489,801 555,775 628,804 690,802 798,768 849,775 895,868 906,795 940,725 979,652 939,563 977,490 998,436 942,384 890,348 822,303 770,244 826,203 905,232 1020,262 1112,282 1163,256 1204,170 1158,86 1200,45 1222,10", 1320, 1320),
  shift("1233,1255 1252,1190 1240,1110 1235,1048 1251,998 1242,882 1190,750 1132,618 1060,520 1031,472 1030,400 1022,318 990,240 969,192 890,160 782,172 715,223 645,220 550,234 440,220 368,205 290,184 242,218 158,225 118,180 -20,40", 1320, 0),
].join(" ");

type Quad = { x: number; y: number; red: string[]; cream?: string[]; red2?: string[]; green: string[]; white?: string[]; roads?: string[]; gaps?: string[] };
const quads: Quad[] = [
  {
    x: 460, y: 150,
    red: [
      "427,298 455,300 470,288 485,310 505,298 520,320 545,275 560,285 570,310 615,322 645,348 668,335 685,350 705,390 722,410 725,455 700,455 665,440 680,420 690,400 665,395 655,375 630,400 600,395 575,410 560,460 545,510 517,500 535,470 500,460 450,455 447,400 433,395 447,365 435,335 440,310",
      "570,525 600,500 625,485 660,465 722,440 725,500 716,570 640,540 600,535 590,580 605,610 575,620 540,615 545,585",
      "605,605 650,578 738,570 750,650 670,655 655,635 625,625", "325,510 360,480 422,522 395,550 375,573 345,573 340,530",
      "420,540 455,487 480,490 495,510 485,560 455,573", "317,585 390,575 392,625 400,655 380,662 360,672 362,682 382,680 378,692 360,700 340,680 313,635",
      "453,650 462,637 507,650 488,700", "300,750 330,735 367,727 369,830 345,838 320,830 300,825 285,850 285,905 247,900 245,840 265,780",
      "370,770 475,772 525,790 597,800 588,830 520,828 470,845 430,830 370,825",
      "565,725 605,718 612,703 622,712 625,745 680,765 715,770 712,735 755,733 757,775 700,782 650,775 610,765 605,778 575,765",
      "667,685 690,655 750,650 755,710 710,715",
      "760,350 765,325 800,308 800,325 775,345", "770,360 830,325 865,345 860,310 890,295 920,320 940,285 975,262 978,300 1000,335 1055,320 1105,250 1145,240 1150,215 1173,245 1170,285 1188,310 1190,380 1168,475 1145,430 1140,385 1115,415 1090,470 1110,490 1105,540 1060,555 1060,590 1085,610 1070,640 1005,640 1005,700 960,740 960,760 1030,745 1035,810 1000,820 990,800 945,830 900,820 885,855 850,830 805,835 755,770 750,700 745,610 725,560 725,520 790,500 820,490 800,470 775,440",
      "1235,350 1265,290 1290,290 1290,345 1265,400 1250,395 1255,370",
      "1305,300 1350,320 1350,600 1310,590 1308,520 1270,530 1195,545 1208,430 1255,430 1250,470 1275,500 1310,480 1325,430",
      "1200,560 1215,550 1310,590 1300,600 1210,580", "1255,650 1350,640 1350,790 1280,795 1240,760 1240,710 1262,695",
      "1035,700 1070,655 1115,700 1125,745 1090,770 1055,750", "1120,640 1155,610 1175,650 1198,665 1180,692 1140,685", "1145,545 1175,565 1165,580 1145,565", "1160,605 1180,595 1190,615 1165,620", "1225,595 1250,605 1245,620 1225,612",
      "320,855 380,835 470,860 475,892 520,850 572,850 600,845 595,872 640,860 690,870 708,890 735,860 770,842 800,850 805,870 790,915 870,860 985,870 990,900 1070,900 1350,890 1350,1350 200,1350 183,1305 195,1240 130,1225 140,1205 205,1180 240,1175 265,1190 355,1205 325,1180 320,1140 265,1075 250,1095 168,1060 205,1020 245,1020 283,1000 275,955 258,945 262,925 310,922 345,928 322,900",
      "95,1130 160,1128 172,1075 215,1105 280,1125 250,1160 205,1180 160,1170", "31,1265 60,1275 50,1305 31,1303",
    ],
    cream: [
      "500,345 560,345 570,375 560,405 535,405 500,380", "585,350 612,370 600,385 585,385", "590,420 640,400 660,410 665,445 640,460 600,445", "520,400 545,405 530,415",
      "735,545 765,520 775,540 750,560", "790,510 810,530 800,545 785,535", "765,575 800,590 815,610 790,625 770,610", "825,530 850,550 840,570 822,555", "875,535 885,590 872,605 862,570", "830,375 855,385 870,410 850,412", "905,385 930,375 935,390 915,402", "945,405 960,395 962,410", "960,515 1000,525 1010,560 985,565 975,545 955,540", "1030,490 1050,480 1060,500 1045,515", "830,650 862,690 835,698 812,690", "805,705 830,700 840,720 815,735", "890,690 915,685 915,715 900,712", "945,785 970,770 960,800", "940,830 965,830 965,850 945,850", "715,470 745,480 735,500 718,500", "790,610 830,625 820,645 790,630", "975,300 1035,330 1000,335",
      "700,900 740,888 760,930 745,1005 720,1020 715,965 710,915", "505,990 540,980 550,1010 545,1050 520,1075 500,1040 510,1010", "595,1000 665,1090 640,1108 590,1040", "825,1080 885,1022 900,1040 845,1095",
      "690,1100 750,1070 770,1085 790,1130 760,1140 690,1130", "780,1140 800,1120 860,1100 880,1145 865,1180 820,1165", "520,1215 545,1188 640,1215 655,1225 640,1245 600,1245 580,1262 555,1285 510,1240", "675,1185 780,1200 785,1235 740,1245 700,1215",
      "870,1285 905,1220 920,1245 935,1270 955,1320 950,1350 905,1340 890,1300", "1085,1130 1145,1150 1150,1185 1140,1245 1105,1295 1078,1290", "1060,1200 1120,1200 1110,1260 1080,1270",
      "985,970 1035,905 1075,910 1080,960 1065,1025 1020,1010", "795,940 880,985 925,1000 975,1030 985,1000 935,950 905,940 870,868 840,835 810,860 790,915",
      "1000,945 1000,905 1035,900 1030,950", "1195,1150 1230,1105 1260,1085 1290,1085 1350,1020 1350,1265 1300,1280 1250,1285 1205,1280 1185,1210", "1080,1100 1100,1065 1105,1090 1090,1115", "345,1200 358,1190 372,1250 345,1250", "385,1080 405,1100 395,1105 370,1088", "600,1255 640,1250 620,1300 590,1320", "690,1235 720,1240 745,1300 700,1290", "800,1290 850,1290 870,1330 800,1335", "395,1290 455,1300 460,1340 420,1345", "1220,900 1260,885 1265,950 1300,1020 1280,1030 1240,960", "445,1030 460,1028 460,1045 448,1045", "480,1075 498,1080 490,1110 478,1100", "1000,1060 985,1100 940,1180 960,1180 1020,1120 1040,1080", "930,1000 945,1010 940,1025", "745,1320 800,1280 740,1250 780,1340", "585,1180 660,1140 640,1190",
    ],
    gaps: ["545,1050 580,1100 620,1115", "600,1120 680,1100 745,1050", "640,1225 700,1290 720,1350", "790,1180 870,1200 895,1205", "975,1035 970,1130 930,1190 915,1250", "1055,1110 1000,1135 960,1190", "570,960 595,1000", "1125,910 1140,990 1110,1100", "1165,910 1175,1080", "1040,905 1070,1030", "880,855 900,940", "560,850 550,930 545,985", "930,760 920,830", "325,890 395,945", "500,1045 480,1080 500,1120", "1005,650 1025,700 1010,760", "760,510 745,570", "890,480 860,540 880,600", "720,520 760,560 850,500", "590,470 560,520", "1200,1280 1180,1200 1165,1140", "320,1080 325,1140", "640,1290 600,1350", "820,1180 860,1290"],
    red2: [
      "1250,1195 1350,1150 1350,1212 1300,1220 1262,1205", "1180,1130 1228,1090 1225,1125 1190,1155", "1230,1110 1250,1098 1245,1128", "1290,1075 1320,1055 1305,1085", "520,365 545,360 565,385 540,400 522,390", "505,365 515,360 512,385", "570,475 625,435 630,480 590,500 570,498", "945,765 970,765 975,795 945,790", "1005,930 1040,925 1035,945 1008,945", "740,1340 760,1300 790,1320", "590,1285 605,1265 610,1290", "1268,795 1300,800 1290,815",
    ],
    green: [
      "125,33 90,75 207,84 205,100 193,115 226,165 238,170 240,190 258,198 272,182 325,192 335,178 355,188 410,155 424,190 450,178 484,180 515,208 516,250 530,262 555,270 572,305 615,322 640,345 668,335 690,365 745,368 752,325 775,305 820,298 845,307 900,290 940,280 972,262 1000,310 1040,325 1070,300 1105,255 1145,235 1150,215 1200,245 1230,270 1250,262 1275,232 1305,220 1310,240 1290,240 1272,262 1240,328 1235,315 1260,270 1360,270 1360,33",
      "562,345 585,340 592,390 575,388", "568,408 590,408 580,460 575,490 590,500 630,487 600,515 580,527 548,515 560,465", "618,438 637,435 640,458 622,462", "765,450 778,445 795,500 780,523 760,520 755,485", "722,480 750,492 722,502", "807,485 815,490 812,508", "685,358 702,375 695,388 680,375", "404,702 420,690 435,660 460,690 490,700 530,665 600,660 605,675 565,725 570,762 515,742 490,720 455,748 430,740", "472,770 490,760 525,775 520,800 480,795", "650,778 695,775 690,785 655,790", "730,785 760,775 778,812 740,805", "972,425 988,415 987,445 972,440", "1095,530 1105,518 1130,518 1118,542", "1255,430 1290,410 1313,435 1280,470 1275,500 1255,465", "1165,375 1190,378 1185,390 1165,388", "1195,560 1203,590 1198,590", "1138,775 1150,745 1170,715 1220,707 1235,745 1190,760", "1160,820 1205,805 1212,760 1222,760 1212,835 1195,860 1170,845", "1090,768 1105,768 1105,790 1090,790", "943,545 955,545 953,555 943,555", "1028,575 1042,568 1040,580", "550,1002 572,1015 590,1045 605,1095 585,1085 575,1045", "31,1190 45,1200 55,1170 68,1168 65,1205 92,1220 95,1240 60,1222 31,1220", "95,1240 150,1240 192,1258 190,1298 155,1270 120,1280 98,1300 75,1298 65,1265 98,1275", "693,1125 725,1120 725,1135", "1160,1155 1195,1150 1180,1175", "1235,1170 1260,1140 1250,1120 1275,1110 1265,1140 1275,1160", "1245,1210 1285,1225 1300,1250 1275,1270 1265,1240", "1250,1290 1305,1280 1315,1310 1350,1310 1350,1350 1300,1350", "1308,920 1335,920 1345,960 1330,1000 1312,970", "948,805 958,803 955,815", "1175,870 1208,878 1190,885", "1065,730 1078,735 1070,742", "1022,968 1035,962 1040,975 1025,982",
    ],
    white: ["692,33 720,33 715,42 695,40", "747,33 752,45 765,60 745,98 770,92 785,100 790,65 800,65 817,82 792,50 797,33", "1300,33 1360,33 1360,60 1335,62"],
    roads: ["395,773 393,832", "345,930 500,1050 490,1075", "320,975 290,1020 320,1060 400,1100", "535,1143 660,1120 745,1048 775,1043 800,970", "620,1130 700,1200 860,1290", "545,940 560,880 600,845", "415,935 600,935 700,900", "735,560 750,700 755,770 800,830", "750,650 860,645 1005,640", "925,640 928,770", "1110,345 1040,355 1000,335", "1060,360 900,450 790,400", "1140,985 1105,1110 1080,1130 1075,1350", "1170,905 1175,1080 1165,1160 1140,1240", "1060,1025 1135,1010", "975,1035 1080,1115 1180,1150", "900,1190 960,1165 1050,1100", "820,1080 775,1040", "325,890 400,935", "560,1180 660,1210 760,1240", "1250,700 1350,690", "960,390 1030,490 1090,610", "840,380 800,460", "905,460 1000,530", "330,1270 395,1250", "800,770 895,810 920,790", "325,1075 305,1140", "545,985 600,1060 640,1110", "1210,1210 1215,1350", "1245,1290 1250,1350", "935,1230 1060,1200", "1000,1250 1060,1300", "860,500 940,600 1010,560", "780,560 900,660", "1005,560 1060,660"],
  },
  {
    x: 900, y: 150,
    red: [
      "0,305 20,320 25,345 55,350 60,370 85,385 75,420 75,445 100,465 70,520 110,530 150,515 140,540 100,565 60,600 50,575 35,570 30,600 0,600", "100,380 145,335 150,370 168,385 150,400 168,425 130,440 95,425 125,410 100,390", "215,425 240,390 280,368 285,375 260,385 290,410 288,435 260,430", "298,365 315,350 365,343 382,375 340,390 300,375", "400,395 425,378 448,390 430,403",
      "462,430 490,395 530,360 540,375 537,395 567,425 570,445 620,470 618,500 600,518 550,505 548,540 555,580 560,605 580,570 600,572 625,545 620,520 700,500 715,525 750,495 800,500 820,490 840,512 870,515 885,545 870,600 815,630 770,665 745,645 743,720 700,730 695,762 655,762 608,690 585,705 590,752 548,742 555,712 502,725 500,655 470,657 450,670 400,645 375,615 400,585 400,540 475,555 498,500 465,460",
      "250,495 290,460 312,490 270,525", "350,475 360,500 395,498 400,515 365,535 345,510 320,500 330,490", "607,380 638,385 622,395", "742,410 775,397 770,422 750,422", "865,435 880,392 925,385 945,400 1010,390 970,440 960,480 925,485 890,532 880,490", "980,480 1010,475 1055,510 1063,550 1040,575 1020,545 980,530", "925,485 980,485 978,632 935,628 940,580 918,545", "1018,595 1042,575 1122,630 1122,648 1075,625", "950,632 978,632 975,730 950,765 900,768 900,745 950,730", "988,632 1012,632 1020,670 1035,675 1055,728 1012,728 1012,765 1057,768 1043,840 1020,870 915,862 935,800 988,745", "1012,350 1020,328 1062,310 1097,350 1119,393 1068,434 1035,420 1018,385", "940,300 948,292 958,308 950,310",
      "0,640 45,645 110,680 250,770 245,785 195,805 205,850 195,890 245,915 235,945 185,915 140,920 125,980 205,1005 195,1050 170,1082 145,1045 120,1070 40,1040 35,1000 0,1010", "60,640 140,595 150,640 180,670 265,670 290,690 265,735 310,728 380,715 435,685 435,720 420,745 350,770 260,775", "265,810 320,780 352,785 350,830 355,915 310,910 265,965 245,930 300,900 305,860 275,830", "355,855 402,855 400,905 395,935 425,930 450,960 478,1045 455,1040 435,1005 380,1022 340,1015 340,935 355,930", "262,1070 290,990 320,1020 330,1033 375,1030 390,1065 340,1075 300,1090", "285,955 305,960 330,1005 315,1005 290,975", "225,980 235,958 255,970 240,990", "85,1070 138,1080 130,1092", "100,1110 135,1100 130,1112",
      "405,790 475,795 510,808 535,800 535,768 597,770 655,778 650,885 620,908 555,870 540,935 515,960 550,1000 528,1045 470,1020 440,960 475,940 440,880 475,850 445,840 440,820 410,815", "657,770 735,775 735,955 690,955 640,925 645,905 665,880 660,820", "740,785 755,785 755,825 780,828 782,780 840,780 825,900 780,918 738,890", "745,718 840,715 860,690 885,740 865,782 745,770", "738,918 783,918 780,960 738,955", "740,970 820,950 852,1030 857,1120 845,1140 767,1130 740,1020", "820,822 870,825 890,860 945,875 925,920 910,978 880,975 840,935 845,900 825,890", "895,780 940,790 910,865 892,850", "1083,780 1145,778 1178,810 1183,848 1140,850 1138,870 1080,870 1105,850 1105,820 1083,815", "1015,875 1025,848 1055,850 1058,890 1040,898", "1068,920 1095,898 1142,895 1142,922 1128,925 1123,985 1080,985 1085,935", "988,898 1032,900 1032,917 990,917", "963,880 985,882 975,905", "1062,1000 1142,993 1135,1070 1058,1065", "1058,1075 1115,1080 1115,1095 1058,1092", "1075,1103 1108,1105 1105,1122", "883,1050 940,1035 995,1010 993,1040 975,1080 935,1085", "1008,1085 1045,1062 1042,1102", "1152,1065 1165,1028 1190,1035 1210,1070 1172,1095", "1053,1120 1172,1175 1175,1215 1203,1258 1185,1298 1107,1243 1070,1285 1050,1288", "870,1192 910,1172 985,1180 985,1215 945,1220 930,1210 905,1225", "1008,1285 1025,1283 1060,1305 1090,1310 1085,1328 1040,1318", "783,1220 825,1220 825,1307 783,1307", "718,1130 745,1122 767,1167 718,1175", "600,1110 612,1108 655,1140 655,1162 635,1158", "625,1198 658,1195 655,1227 640,1222", "415,1240 425,1223 460,1233 507,1225 523,1270 515,1305 488,1288 487,1262 455,1262", "465,1200 475,1190 483,1200 473,1210", "655,1015 700,1012 730,995 732,1035 672,1070 655,1050", "572,1020 585,990 603,990 600,1015", "580,970 592,953 600,970", "0,1155 38,1147 35,1180 0,1215",
    ],
    cream: ["80,735 95,728 108,740 100,752", "85,870 110,862 125,870 120,890 90,885", "110,825 150,800 260,785 200,800 205,830 130,850", "105,1025 130,1015 140,1030 120,1050", "30,860 60,830 60,870 45,880", "50,755 110,765 115,830 105,790", "160,745 180,738 200,760"],
    gaps: ["50,645 250,772", "20,915 145,1025", "0,835 60,830 130,815", "60,835 70,935", "150,850 160,900", "0,605 60,600", "110,765 250,785"],
    green: [
      "0,70 15,65 50,60 55,35 140,33 138,60 98,75 110,100 120,125 130,100 150,110 140,150 120,175 105,170 115,205 105,225 130,250 160,255 200,290 235,255 245,290 275,300 310,320 300,350 240,380 215,425 250,460 280,480 250,520 200,545 150,575 105,575 110,560 150,530 150,515 100,520 85,535 70,520 100,465 135,440 170,400 175,370 150,350 155,320 110,330 85,300 65,300 50,350 35,350 45,300 65,265 0,272",
      "0,33 20,33 20,40 0,42", "150,33 200,33 195,42 165,47 150,42", "142,185 160,180 165,165 180,175 205,165 215,175 235,185 235,210 215,240 190,245 160,220 145,200",
      "390,33 590,33 585,50 550,65 555,95 565,105 550,118 500,115 490,95 485,145 460,135 455,160 480,190 520,215 560,235 580,255 630,248 640,275 665,290 668,318 630,335 600,355 545,345 480,322 447,348 440,330 437,290 425,240 405,240 385,225 350,178 280,165 300,135 360,90",
      "285,290 300,265 318,252 345,265 360,298 330,290 300,300", "145,580 200,560 250,530 275,555 295,565 300,530 320,518 345,540 400,545 405,580 375,610 380,640 330,655 290,685 265,668 210,680 175,665 140,630", "262,735 300,690 370,650 415,650 440,680 400,720 380,712 350,730 310,725 275,743", "60,640 85,600 110,605 100,640", "395,500 420,460 430,440 465,450 470,465 500,490 490,530 470,558 430,540 405,530", "620,495 640,460 640,400 670,395 700,405 698,420 720,460 720,500 685,525 670,490 640,490", "750,465 770,455 775,405 810,405 860,435 885,480 875,512 840,490 820,455 790,465 765,485", "875,575 905,520 918,520 920,560 938,585 920,600 920,655 880,662 835,630 875,600", "775,658 815,675 820,695 845,690 845,715 800,725 770,745 760,710 772,690", "360,850 385,840 400,808 402,855", "235,1070 245,1058 270,1085 308,1095 270,1118 245,1112", "520,1145 530,1130 560,1125 600,1135 655,1170 655,1195 605,1195 540,1212 535,1180", "995,440 1010,395 1025,420 1015,460",
      "1198,1042 1225,1065 1225,1095 1260,1130 1270,1105 1298,1093 1285,1140 1262,1150 1245,1180 1240,1225 1205,1230 1240,1270 1205,1302 1195,1290 1203,1260 1170,1210 1172,1180 1143,1160 1175,1128 1195,1165 1195,1190 1215,1190 1225,1160 1230,1130 1215,1105", "480,945 505,940 505,960 485,962", "388,905 425,912 400,915 398,935", "305,435 322,432 315,442", "205,735 228,725 215,742", "120,1000 175,995 170,1010 130,1010", "722,600 743,600 735,612", "440,675 458,680 452,703", "265,530 290,525 298,550 285,558", "10,920 40,930 40,980 15,1000 0,960",
    ],
    roads: ["0,745 250,778", "120,820 155,890", "470,645 535,612 640,605 745,600", "1018,385 1085,335", "340,935 425,930 500,1020", "795,735 797,775", "980,485 980,632", "890,860 915,865", "640,780 735,795", "55,690 100,690", "30,700 0,690", "105,860 110,880 145,900", "920,1190 985,1180", "300,830 345,840"],
  },
  {
    x: 460, y: 590,
    red: [
      "195,15 370,0 430,0 412,50 465,55 520,112 570,90 632,125 638,105 690,125 680,165 635,185 580,212 550,212 465,240 440,238 440,210 420,180 360,188 348,235 340,245 300,208 310,175 293,160 290,85 245,85 238,40", "345,215 358,192 425,180 440,210 405,265 358,272 340,250", "470,20 500,25 570,85 520,112", "400,0 455,0 430,20", "535,0 600,0 598,30 560,35", "545,50 605,30 605,60 580,82", "610,25 665,0 670,40 640,30", "655,55 720,28 765,25 800,65 780,82 715,88", "780,10 845,50 845,75 780,30", "858,40 918,40 915,75 890,85 860,70", "855,0 915,0 915,35", "730,128 755,95 850,88 850,98 920,105 920,155 890,155 875,205 850,230 790,190", "662,230 680,195 728,178 780,195 798,230 800,275 760,288 755,305 740,308 690,280", "805,225 850,238 932,258 933,375 820,372 805,300", "912,240 915,222 933,225 930,245", "820,375 845,372 838,395", "860,375 920,378 922,405 860,405", "870,430 930,403 945,460 915,465",
      "942,155 975,100 1010,85 1070,75 1090,80 1110,110 1110,135 1175,185 1150,195 1120,225 1155,262 1130,290 1085,292 1025,265 1005,230 985,180", "972,285 990,260 1025,262 1088,295 1080,330 1085,390 1000,410 957,372 978,330", "1140,330 1168,318 1168,350 1143,350", "970,0 1040,0 1025,30 980,20", "1075,0 1350,0 1350,155 1310,160 1275,175 1265,190 1240,180 1215,120 1195,105 1160,140 1115,130 1115,85 1075,30", "1190,115 1230,180 1225,208 1200,200", "1222,262 1265,185 1275,230", "1255,305 1300,285 1280,245 1345,260 1350,320 1330,325", "1210,362 1245,345 1225,370", "1228,435 1245,400 1297,435 1265,462", "1213,478 1245,460 1280,475 1290,520 1340,495 1345,510 1330,555 1300,565 1298,600 1268,622 1240,600", "1203,530 1225,528 1253,615 1225,610", "1285,620 1350,610 1350,690 1300,650", "553,350 600,328 625,358 595,380 570,405 557,385", "678,392 725,365 777,390 760,415 685,412", "533,240 540,220 570,228 570,272 533,272", "835,535 855,510 900,560 862,608 835,570 850,555", "885,490 910,475 905,498", "932,570 945,548 990,548 1025,580 1015,590 960,592", "940,598 1032,615 1027,635 990,630 965,622", "1038,600 1050,578 1080,592 1075,627", "1068,520 1097,488 1128,525 1110,530 1097,558", "993,465 1020,470 1040,440 1015,410 1045,425 1080,418 1060,435 1065,465 1035,460 1025,480", "978,510 998,505 993,520", "990,530 1018,550 1000,545", "1028,655 1045,640 1055,660", "1015,692 1055,685 1058,715", "982,765 990,712 1007,710 1008,745 1040,740 1043,755 1020,797 987,775", "1103,685 1115,685 1125,705 1145,710 1135,735 1120,735 1138,758 1103,725", "1150,735 1165,690 1228,682 1230,705 1242,720 1255,745 1275,755 1275,790 1300,825 1318,830 1320,860 1290,862 1222,785 1235,755 1200,745 1195,735", "1172,788 1228,792 1290,862 1315,868 1310,885 1283,918", "1078,902 1135,832 1143,850 1097,918", "1135,935 1160,920 1162,950 1137,968", "1148,985 1155,978 1180,992 1175,998", "1005,962 1050,952 1025,965 1043,980 1033,990", "1270,685 1285,655 1325,695 1330,730 1300,730", "1258,710 1285,705 1275,720", "1260,740 1295,735 1290,752 1265,755", "1280,775 1310,765 1312,780 1285,785", "1290,795 1315,795 1305,808", "1320,775 1350,770 1350,860 1320,855",
    ],
    cream: ["692,230 725,203 770,235 762,282 740,283 700,252", "1015,345 1035,325 1052,345 1040,365 1022,358", "1240,550 1258,548 1262,562 1242,565", "470,58 515,112 522,115 475,50", "1180,55 1200,75 1215,68 1190,50"],
    green: ["985,100 990,65 1020,30 1050,40 1070,75 1050,65 1020,65 1000,80 990,100", "1012,85 1025,83 1025,95 1012,95", "1105,80 1120,58 1145,65 1130,90 1120,108 1105,100", "1270,0 1350,0 1350,105 1310,110 1308,150 1298,190 1285,180 1295,110 1320,90 1320,30", "498,22 505,10 510,28", "553,225 557,225 548,290 543,290", "1308,925 1325,930 1310,938", "1225,278 1235,278 1232,286"],
    gaps: ["465,20 520,112 575,85", "540,45 600,30", "605,0 610,40", "1110,80 1110,135", "1185,100 1230,190"],
    roads: ["1215,0 1215,60 1240,180", "1245,0 1265,180", "1190,65 1215,70", "720,30 740,88", "1085,292 1025,262", "820,370 932,375", "1225,790 1290,862"],
  },
  {
    x: 900, y: 590,
    red: [
      "-10,0 20,0 50,35 100,38 122,60 88,150 15,145 18,175 0,180", "50,150 80,155 75,182 48,178", "78,22 100,8 105,25 90,32", "108,25 138,40 120,38", "112,118 130,120 125,138 108,130", "150,93 195,102 208,122 150,108", "280,205 315,220 308,238 285,225", "260,262 270,253 275,278", "0,255 15,272 35,275 35,305 10,325 0,325", "18,345 30,333 65,345 85,385 65,392 20,360", "328,335 347,338 338,370 340,395 315,400 295,415 288,397 310,395 325,360", "370,345 385,340 415,308 425,318 395,340 405,360 380,358", "427,262 475,255 478,280 450,285 430,272", "520,265 550,255 565,262 560,290 540,297 523,285", "548,168 562,180 582,180 565,205 545,218 552,195", "605,168 640,133 650,150 620,175", "645,45 657,40 680,70 675,87 655,80", "657,225 672,222 690,245 705,230 740,215 745,240 715,262 665,265", "675,355 702,335 722,345 722,393 703,395", "540,390 570,375 573,388 550,398", "828,112 845,100 865,90 870,105 890,115 870,132 840,128", "828,165 840,148 872,172 862,190", "880,168 925,190 960,212 1000,207 1028,218 1000,242 960,242 885,195", "1132,205 1168,202 1165,235 1145,247", "1155,20 1195,18 1230,5 1243,28 1210,50 1158,57", "800,562 828,538 842,580 828,587", "608,628 620,625 638,642 695,610 707,620 702,645 718,680 690,703 665,707 625,680", "452,545 480,532 475,542", "525,545 535,528 540,538", "240,600 285,590 287,612 245,622", "318,597 375,585 375,608", "78,545 100,545 115,575 90,562", "0,495 25,508 0,525", "0,530 15,550 0,555", "0,610 45,615 52,650 70,660 70,700 45,710 20,690 0,690", "75,655 115,643 150,670 140,688 105,685 85,722 75,700", "205,668 215,645 245,635 220,665 235,692 205,712 212,690", "155,740 185,742 170,755", "0,680 35,712 0,740", "35,780 60,750 48,728 108,765 85,800 90,815 65,825 50,800", "0,765 20,765 60,840 40,865 0,862", "140,800 150,785 160,800 200,787 203,805 190,820 180,808",
      "125,860 140,842 180,842 205,870 205,900 222,940 195,965 210,990 175,1032 155,1012 127,1033 108,1012 130,985 80,985 68,965 70,935 52,900 110,885", "205,845 225,855 255,858 258,875 240,885 255,900 250,915 232,915 225,890 205,875", "245,950 275,942 282,965 255,973", "263,985 300,970 320,955 343,962 340,978 265,998", "218,990 235,978 257,1028 228,1015", "188,1040 215,1020 225,1030 200,1055", "298,1035 325,1030 340,1060 345,1075 375,1065 375,1075 347,1102 310,1072", "275,1068 287,1058 296,1070 285,1080", "262,1110 285,1088 312,1115 290,1138", "420,1030 425,1000 437,990 445,1015 430,1032", "122,1180 150,1162 168,1175 165,1195 125,1197", "487,870 500,858 520,862 525,880 505,895 490,885",
      "380,1190 440,1155 455,1125 470,1103 485,1105 490,1138 510,1138 510,1125 550,1135 555,1170 548,1195 565,1225 545,1250 500,1245 475,1265 488,1290 485,1305 508,1311 405,1311 395,1295 410,1275 368,1278 375,1245 390,1240 382,1215",
    ],
    green: ["0,0 30,0 35,30 55,55 25,108 0,108", "75,238 80,205 100,225", "108,228 115,200 135,183 150,200 215,172 220,190 150,225", "220,130 240,123 250,135 290,145 298,180 285,188 245,175", "35,895 50,860 75,860 85,890 60,885", "95,875 97,840 123,850 105,862 105,885"],
    roads: ["10,680 45,710", "440,1160 510,1190 550,1225", "10,765 60,830", "20,835 50,845", "55,795 85,785"],
  },
];

/* Small parcels strewn over the dense parts of the city: rotated slivers, up to `max` long. */
function scatter(seed: number, n: number, x0: number, y0: number, w: number, h: number, max: number, thin = 0.45) {
  let s = seed;
  const rnd = () => ((s = (s * 16807) % 2147483647) / 2147483647);
  const out: string[] = [];
  for (let i = 0; i < n + 3; i++) {
    const x = x0 + rnd() * w, y = y0 + rnd() * h, a = 4 + rnd() * max, b = 3 + rnd() * max * thin;
    const t = (rnd() < 0.5 ? 0.6 : 2.1) + rnd() * 0.7;
    const ux = Math.cos(t) * a, uy = Math.sin(t) * a, vx = -Math.sin(t) * b, vy = Math.cos(t) * b;
    out.push(`M${x.toFixed(1)} ${y.toFixed(1)}l${ux.toFixed(1)} ${uy.toFixed(1)} ${vx.toFixed(1)} ${vy.toFixed(1)} ${(-ux * 0.8).toFixed(1)} ${(-uy * 0.9).toFixed(1)}z`);
  }
  return out.join("");
}
const creamLots =
  scatter(77331, 90, 735, 490, 150, 150, 24) + scatter(4177, 70, 880, 490, 190, 130, 20) + scatter(12911, 26, 790, 640, 130, 80, 18) + scatter(50021, 30, 490, 330, 170, 110, 18) +
  scatter(31077, 26, 880, 1230, 430, 110, 22) + scatter(90133, 44, 1310, 780, 210, 270, 20) + scatter(44017, 34, 530, 1240, 370, 110, 26) + scatter(7119, 16, 780, 310, 160, 160, 16) +
  scatter(61111, 14, 1190, 880, 160, 120, 20) + scatter(8171, 18, 1240, 560, 150, 200, 18) + scatter(2903, 20, 1150, 1320, 170, 120, 16) + scatter(19119, 20, 850, 1060, 200, 160, 16);
const redLots =
  scatter(21001, 56, 1080, 640, 150, 120, 20, 0.7) + scatter(8011, 30, 1030, 520, 110, 150, 20, 0.7) + scatter(63001, 28, 1170, 875, 170, 22, 16, 0.7) + scatter(30011, 20, 1490, 840, 130, 150, 18, 0.7) +
  scatter(90001, 14, 1010, 800, 100, 60, 9, 0.9) + scatter(47011, 16, 1130, 1530, 180, 60, 12, 0.9) + scatter(15013, 16, 1240, 780, 80, 30, 14, 0.8);
const greenLots =
  scatter(15001, 46, 338, 840, 80, 60, 4, 1) + scatter(18001, 40, 418, 900, 130, 36, 4, 1) + scatter(27001, 18, 500, 870, 50, 80, 5, 1) + scatter(33001, 12, 1040, 640, 180, 220, 6, 1) +
  scatter(51001, 18, 1235, 1090, 60, 180, 16, 0.6) + scatter(60001, 18, 1310, 920, 40, 80, 10, 0.6);

function MapView() {
  const v = [470.4, 614.8, 759.3, 903.7, 1048.200, 1192.600, 1337.100];
  const h = [160.4, 305, 449.4, 594, 738.400, 882.900, 1027.200];
  return (
    <div className="h-full w-[956px] shrink-0 border-t border-l border-[#b0b0b0] bg-white">
      <svg className="block" width="953" height="910" viewBox="425 139 953 910">
        <g transform="translate(460 150) scale(.33333)"><polygon points={boundary} fill={CREAM} stroke="#222" strokeWidth="3.200" /></g>
        {quads.map((q, i) => (
          <g key={i} transform={`translate(${q.x} ${q.y}) scale(.33333)`}>
            {q.red.map((p, k) => <polygon key={k} points={p} fill="#e31a1c" />)}
            {q.cream?.map((p, k) => <polygon key={k} points={p} fill={CREAM} />)}
            {q.gaps?.map((p, k) => <polyline key={k} points={p} fill="none" stroke={CREAM} strokeWidth="6" />)}
            {q.red2?.map((p, k) => <polygon key={k} points={p} fill="#e31a1c" />)}
            {q.roads?.map((p, k) => <polyline key={k} points={p} fill="none" stroke="#fbcabf" strokeWidth="3" />)}
          </g>
        ))}
        <g transform="translate(460 150) scale(.33333)"><path d={creamLots} fill={CREAM} /><path d={redLots} fill="#e31a1c" /></g>
        {quads.map((q, i) => (
          <g key={i} transform={`translate(${q.x} ${q.y}) scale(.33333)`}>
            {q.green.map((p, k) => <polygon key={k} points={p} fill="#00ce00" />)}
            {q.white?.map((p, k) => <polygon key={k} points={p} fill="#fff" />)}
          </g>
        ))}
        <g transform="translate(460 150) scale(.33333)">
          <path d={greenLots} fill="#00ce00" />
          <path d="M1228 45l27-10 3 15-18 12zM1303 55l22-10 22 20-22 16zM1208 115l8-8 9 8-8 6zM1500 270l14-8 12 22-10 22-14-18zM1450 270l22 20 8 30-14-10z" fill={CREAM} />
          <path d="M1178 78l17-6 9-12 3 22h21l-3 18h-15l-7 16 4-24-17-14z" fill="#e31a1c" />
          <path d="M1300 40l40 24" stroke="#222" strokeWidth="3" />
          <path d="M1465 575l35-5 60-30" stroke="#dff5d8" strokeWidth="3" fill="none" />
        </g>
        <g stroke="#222" strokeWidth="1.400">
          {v.map((x) => <path key={x} d={`M${x} 160V1027.500`} />)}
          {h.map((y) => <path key={y} d={`M470 ${y}H1337.500`} />)}
        </g>
      </svg>
    </div>
  );
}

/* ---------- styling panel ---------- */

const BTN = "flex items-center rounded-[3px] border border-[#b0b0b0] bg-gradient-to-b from-[#fefefe] to-[#ececec]";
const Combo = ({ cls, children }: Kids & { cls: string }) => (
  <div className={`${BTN} ${cls} h-[25px] shrink-0 justify-between pr-[7px] pl-[5px]`}><div className="flex items-center">{children}</div><Arrow /></div>
);
const Spin = ({ cls, v, clear }: { cls: string; v: string; clear?: boolean }) => (
  <div className={`flex shrink-0 items-stretch rounded-[3px] border border-[#b0b0b0] bg-white ${cls}`}>
    <div className="flex flex-1 items-center justify-between pl-[4px]"><span>{v}</span>{clear && <ClearIcon />}</div>
    <div className="flex w-[14px] flex-col items-center justify-center gap-[4px] rounded-r-[3px] border-l border-[#b8b8b8] bg-[#f7f7f7]">
      <svg width="7" height="4" viewBox="0 0 7 4"><path d="M0 4h7L3.500 0z" fill="#555" /></svg>
      <svg width="7" height="4" viewBox="0 0 7 4"><path d="M0 0h7L3.500 4z" fill="#555" /></svg>
    </div>
  </div>
);
function ClearIcon() {
  return <svg width="13" height="10" viewBox="0 0 13 10" className="mr-[11px]"><path d="M0 5l4-5h9v10H4z" fill="#999" /><path d="M5.500 2.500l5 5M10.500 2.500l-5 5" stroke="#fff" strokeWidth="1.400" /></svg>;
}
const DataDef = () => (
  <svg width="23" height="18" viewBox="0 0 23 18" fill="none" className="shrink-0"><path d="M0 9l6-7v14z" fill="#999" stroke="#666" /><path d="M5.500 1.500h12v15h-12z" fill="#fdfdfd" stroke="#777" strokeWidth="1.200" /><path d="M8 5h8M8 13h7M6 9h11" stroke="#555" strokeWidth="1.400" /><path d="M16 12.500h7L19.500 16z" fill="#444" /></svg>
);
const Row = ({ label, cls, children }: Kids & { label: string; cls: string }) => (
  <div className={`flex shrink-0 items-center ${cls}`}>
    <span className="w-[133px] shrink-0 pt-[2px] pl-px">{label}</span>
    <div className="flex w-[300px] items-center">{children}</div>
    <DataDef />
  </div>
);
const ColorBtn = () => (
  <>
    <div className={`${BTN} h-7 w-[279px] shrink-0 px-[4px]`}><div className="h-4 w-full rounded-[3px] bg-[#e31a1c]" /></div>
    <div className={`${BTN} h-7 w-3 shrink-0 justify-center`}><Arrow /></div>
  </>
);
const Undo = () => <path d="M3 9l8-6v4c8 0 11 4 10 9s-6 5-7 5c4-3 4-8-3-8v4z" fill="#e8843c" stroke="#c9692a" />;
const Redo = () => <path d="M21 9l-8-6v4C5 7 2 11 3 16s6 5 7 5c-4-3-4-8 3-8v4z" fill="#7cc08a" stroke="#5a9a68" />;
const ToolBtn = ({ cls, children }: Kids & { cls: string }) => <div className={`${BTN} ${cls} shrink-0 justify-center`}>{children}</div>;

function StylingPanel() {
  return (
    <div className="flex flex-1 flex-col pl-[8px]">
      <div className="flex h-[22px] shrink-0 items-center justify-between pr-[4px] pb-[2px] pl-[1px]"><span>Layer Styling</span><PaneButtons /></div>
      <Combo cls="w-[530px]"><PolyIcon /><span className="ml-[3px]">builtup_spaces_gridded</span></Combo>
      <div className="mt-[6px] flex h-[828px] shrink-0">
        <div className="flex w-[38px] shrink-0 flex-col">
          <div className="flex h-[32px] shrink-0 items-center pl-[7px]">
            <Ic s={22}><path d="M1 12l9-5 7 7-4 9-9-4z" fill="#8fb5c9" /><path d="M4 8l7-4 4 6z" fill="#cfd97a" /><path d="M1 13l4 6 5-2z" fill="#d9536a" /><path d="M10 11l8 9 2-7-4-4z" fill="#c7b48a" /><path d="M15 11l8-8" stroke="#ad9660" strokeWidth="3.500" /></Ic>
          </div>
          <div className="flex flex-1 flex-col bg-[#5d5d5d] pl-[4px]">
            <div className="flex h-8 items-center"><Ic s={22}><g transform="translate(0 3)"><Tag f="#ffec5c" s="#d9ac00" /></g></Ic></div>
            <div className="flex h-8 items-center"><svg width="23" height="16" viewBox="0 0 23 16"><text x="1" y="12" fontSize="11.500" fontWeight="700" fontFamily="DejaVu Sans" textLength="20" lengthAdjust="spacingAndGlyphs" fill="#222" stroke="#dfe6f5" strokeWidth="4" strokeLinejoin="round" paintOrder="stroke">abc</text></svg></div>
            <div className="flex h-8 items-center"><Ic s={22}><path d="M12 1l10 6-10 6L2 7z" fill="#f58b8b" stroke="#a02020" /><path d="M2 7l10 6v10L2 17z" fill="#86e32e" stroke="#3b7d0a" /><path d="M22 7l-10 6v10l10-6z" fill="#ffea4a" stroke="#a08a00" /></Ic></div>
            <div className="flex h-8 items-center"><Ic s={22}><path d="M5 17V7h3M19 17V7h-3M12 7v14" stroke="#c47a28" strokeWidth="2.500" /><path d="M7 1h10v7H7z" fill="#f26a6a" stroke="#c33" /><path d="M1 16h9v7H1z" fill="#fff07a" stroke="#b99400" /><path d="M14 16h9v7h-9z" fill="#8cb8ea" stroke="#4a79b3" /></Ic></div>
            <div className="flex h-8 items-center pl-[2px]"><Ic s={20}><g transform="translate(-1 0) scale(.62)"><Redo /></g><g transform="translate(9 9) scale(.62)"><Undo /></g></Ic></div>
          </div>
        </div>
        <div className="ml-[3px] flex w-[489px] shrink-0 flex-col">
          <Combo cls="w-[489px]"><svg width="15" height="15" viewBox="0 0 15 15" className="ml-[2px]"><path d="M.5 .5h10v3.500h-10zM2.500 5.700h11v3.500h-11zM.5 11h10v3.500h-10z" fill="#0cb14b" stroke="#064d22" /></svg><span className="ml-[3px]">Single Symbol</span></Combo>
          <div className="mt-[6px] flex h-[136px] shrink-0">
            <div className="mt-[35px] ml-[29px] h-[61px] w-[61px] bg-[#e31a1c]" />
            <div className="mt-[5px] ml-[35px] h-[119px] w-[296px] border border-[#b0b0b0] bg-white">
              <div className="flex h-[19px] items-center pl-[6px]"><Arrow c="#666" /><span className="ml-[9px] h-4 w-4 bg-[#e31a1c]" /><span className="ml-[6px] font-bold">Fill</span></div>
              <div className="flex h-[19px] items-center bg-[#308cc6] pl-[43px] text-white"><span className="h-4 w-4 bg-[#ab3c52]" /><span className="ml-[6px]">Simple Fill</span></div>
            </div>
            <div className="ml-[6px] grid h-fit grid-cols-2 gap-x-[6px] gap-y-[4px]">
              <ToolBtn cls="h-6 w-7"><Ic s={16}><path d="M8 1h8v7h7v8h-7v7H8v-7H1V8h7z" fill="#fff" stroke="#4b8a52" strokeWidth="2" /><path d="M12 5v14M5 12h14" stroke="#4b8a52" strokeWidth="3" /></Ic></ToolBtn>
              <ToolBtn cls="h-6 w-7"><svg width="14" height="12" viewBox="0 0 14 12"><path d="M7 .5L13.500 11.500H.5z" fill="#d5d5d5" stroke="#c0c0c0" /></svg></ToolBtn>
              <ToolBtn cls="h-6 w-7"><svg width="14" height="6" viewBox="0 0 14 6"><path d="M.5.5h13v5H.5z" fill="#fff" stroke="#dccaca" /><path d="M3 3h8" stroke="#dccaca" strokeWidth="1.500" /></svg></ToolBtn>
              <ToolBtn cls="h-6 w-7"><svg width="14" height="12" viewBox="0 0 14 12"><path d="M7 11.500L13.500.5H.5z" fill="#d5d5d5" stroke="#c0c0c0" /></svg></ToolBtn>
              <ToolBtn cls="h-6 w-7"><svg width="15" height="15" viewBox="0 0 15 15"><path d="M1 2.500h10v11H1z" fill="#aaa" stroke="#666" /><path d="M3.500.5h10v11h-10z" fill="#eee" stroke="#666" /><path d="M9.500 9.500h5v5h-5z" fill="#ffe680" stroke="#d9ac00" /></svg></ToolBtn>
              <ToolBtn cls="h-6 w-7"><svg width="13" height="15" viewBox="0 0 13 15"><path d="M4 4c0-4 6-4 6 0v4" fill="none" stroke="#999" strokeWidth="2" /><path d="M.5 7.500h12v7H.5z" fill="#f3dc1c" stroke="#c9a100" /></svg></ToolBtn>
            </div>
          </div>
          <div className="h-px shrink-0 bg-[#999]" />
          <div className="mt-[9px] flex shrink-0 items-center"><span className="w-[120px] pl-px whitespace-nowrap">Symbol layer type</span><Combo cls="w-[359px]">Simple Fill</Combo></div>
          <div className="mt-3 ml-[10px] flex flex-col">
            <Row label="Fill color" cls="h-7"><ColorBtn /></Row>
            <Row label="Fill style" cls="mt-[6px] h-[25px]"><Combo cls="w-[291px]"><span className="h-4 w-8 bg-[#666]" /><span className="ml-[3px]">Solid</span></Combo></Row>
            <Row label="Stroke color" cls="mt-[7px] h-7"><ColorBtn /></Row>
            <Row label="Stroke width" cls="mt-[6px] h-[25px]"><Spin cls="h-[24px] w-[156px] mt-px" v="0.260000" clear /><div className="w-[6px]" /><Combo cls="w-[129px]">Millimeters</Combo></Row>
            <Row label="Stroke style" cls="mt-[7px] h-[25px]"><Combo cls="w-[291px]"><span className="h-[2px] w-8 bg-black" /><span className="ml-[3px]">Solid Line</span></Combo></Row>
            <Row label="Join style" cls="mt-[7px] h-[25px]"><Combo cls="w-[291px]"><svg width="14" height="15" viewBox="0 0 14 15"><path d="M0 .5h9.500l4 4V14h-8V8.500H0" fill="#5f88ba" stroke="#111" /><path d="M0 5.500h10V14" fill="none" stroke="#e8d21c" strokeWidth="1.600" strokeDasharray="2 2" /></svg><span className="ml-[5px]">Bevel</span></Combo></Row>
            <Row label="Offset" cls="mt-2 h-14">
              <div className="-ml-[14px] flex flex-col gap-2 pt-[2px]">
                <div className="flex items-center"><span className="w-[14px]">x</span><Spin cls="h-6 w-[156px]" v="0.000000" /></div>
                <div className="flex items-center"><span className="w-[14px]">y</span><Spin cls="h-6 w-[156px]" v="0.000000" /></div>
              </div>
              <div className="w-[6px]" /><Combo cls="w-[129px]">Millimeters</Combo>
            </Row>
          </div>
          <div className="flex-1" />
          <div className="flex h-6 shrink-0 items-center pl-px">
            <Check on /><span className="ml-[5px] w-[148px]">Enable symbol layer</span><DataDef />
            <div className="w-[40px]" /><Check /><span className="ml-[5px] w-[95px]">Draw effects</span>
            <ToolBtn cls="h-6 w-6"><svg width="15" height="14" viewBox="0 0 15 14"><path d="M7 0l2 5h5l-4 3 1 5-4-3-4 3 1-5-4-3h5z" fill="#d5d0c2" /></svg></ToolBtn>
          </div>
          <div className="mt-[21px] flex h-6 shrink-0 items-center pl-[5px]"><svg width="7" height="12" viewBox="0 0 7 12"><path d="M0 0v12l7-6z" fill="#444" /></svg><span className="ml-[11px] font-bold">Layer Rendering</span></div>
          <div className="mt-[2px] flex h-[26px] shrink-0 items-center">
            <ToolBtn cls="h-6 w-6"><Ic s={14}><Undo /></Ic></ToolBtn><div className="w-[6px]" /><ToolBtn cls="h-6 w-6"><Ic s={14}><Redo /></Ic></ToolBtn>
            <div className="flex-1" /><Check on /><span className="ml-[5px] w-[89px]">Live update</span>
            <ToolBtn cls="h-[25px] w-[80px]"><svg width="15" height="16" viewBox="0 0 15 16"><path d="M0 9l3-2 3 4L12 0l3 1-8 15H5z" fill="#5e8a45" stroke="#3f6530" strokeWidth=".6" /></svg><span>Apply</span></ToolBtn>
          </div>
        </div>
      </div>
      <div className="mt-[3px] -ml-[3px] flex h-[27px] shrink-0 items-start border-t border-[#b2b2b2]">
        <div className="-mt-px flex h-[27px] w-[110px] items-center justify-center rounded-b-[3px] border border-t-0 border-[#b2b2b2] bg-[#f5f5f5]">Layer Styling</div>
        <div className="flex h-[24px] w-[151px] items-center justify-center rounded-b-[3px] border border-t-0 border-l-0 border-[#b9b9b9] bg-[#dcdcdc]">Processing Toolbox</div>
        <div className="flex h-[24px] w-[92px] items-center justify-center rounded-b-[3px] border border-t-0 border-l-0 border-[#b9b9b9] bg-[#dcdcdc]">Value Tool</div>
      </div>
    </div>
  );
}

/* ---------- status bar ---------- */

function StatusBar() {
  return (
    <div className="flex h-[31px] shrink-0 items-center text-[11px]">
      <div className="ml-[4px] flex h-[25px] w-[270px] shrink-0 items-center rounded-[3px] border border-[#b0b0b0] bg-white pl-[8px] text-[13px]">
        <svg width="13" height="13" viewBox="0 0 13 13" fill="none" stroke="#999" strokeWidth="1.500"><circle cx="5.500" cy="5.500" r="4.500" /><path d="M9 9l3.500 3.500" /></svg>
        <span className="ml-[7px] flex-1">intersection</span>
        <div className="-mr-[3px]"><ClearIcon /></div>
      </div>
      <span className="ml-[751px] w-[64px] shrink-0">Coordinate</span>
      <div className="flex h-[23px] w-[110px] shrink-0 items-center rounded-[3px] border border-[#b0b0b0] bg-white pl-[7px]">478800,1006466</div>
      <svg width="16" height="16" viewBox="0 0 16 16" className="ml-[4px] shrink-0" fill="none"><path d="M2 3l5-2 3 3-3 4-4-1zM6 8l5 5M8 11l6-1-2 5z" fill="#888" stroke="#333" strokeWidth="1.500" /><path d="M10 3l4 3-3 3z" fill="#333" /></svg>
      <span className="ml-[13px] w-[33px] shrink-0">Scale</span>
      <div className="flex h-[23px] w-[92px] shrink-0 items-center justify-between rounded-[3px] border border-[#b0b0b0] bg-white pl-[4px]"><span>1:130830</span><span className="flex h-full w-[15px] items-center justify-center border-l border-[#b8b8b8] bg-[#f7f7f7]"><Arrow /></span></div>
      <svg width="13" height="15" viewBox="0 0 13 15" className="ml-[17px] shrink-0"><path d="M3 7V4c0-4 7-4 7 0v3" fill="none" stroke="#777" strokeWidth="1.600" /><path d="M.5 6.500h12v8H.5z" fill="#555" /></svg>
      <span className="ml-[9px] w-[55px] shrink-0">Magnifier</span><Spin cls="h-[24px] w-[98px]" v="100%" />
      <span className="ml-[9px] w-[56px] shrink-0">Rotation</span><Spin cls="h-[24px] w-[94px]" v="0.0 °" />
      <div className="w-[6px]" /><Check on /><span className="ml-[5px] w-[56px] shrink-0">Render</span>
      <svg width="15" height="15" viewBox="0 0 15 15" fill="#999" stroke="#555" strokeWidth=".8" className="shrink-0"><circle cx="7.500" cy="7.500" r="6.800" /><path d="M.5 7.500h14M2 4h11M2 11h11M7.500.5v14" /><ellipse cx="7.500" cy="7.500" rx="3.300" ry="6.800" fill="none" /></svg>
      <span className="ml-[3px] w-[91px] shrink-0">EPSG:32637</span>
      <svg width="16" height="15" viewBox="0 0 16 15" className="shrink-0"><ellipse cx="8" cy="6" rx="8" ry="6" fill="#555" /><path d="M9 10l5 5 0-6z" fill="#555" /><path d="M3.500 6h2M7 6h2M10.500 6h2" stroke="#fff" strokeWidth="1.800" /></svg>
    </div>
  );
}

const menus: [string, string, string][] = [["Pro", "j", "ect"], ["", "E", "dit"], ["", "V", "iew"], ["", "L", "ayer"], ["", "S", "ettings"], ["", "P", "lugins"], ["Vect", "o", "r"], ["", "R", "aster"], ["", "D", "atabase"], ["", "W", "eb"], ["", "M", "esh"], ["Pro", "c", "essing"], ["", "H", "elp"]];

export default function App() {
  return (
    <div className="flex h-[1082px] w-[1922px] flex-col overflow-hidden border border-[#999] bg-[#efefef] font-['DejaVu_Sans',sans-serif] text-[13px] leading-[16px] text-[#111]">
      <div className="relative flex h-[37px] shrink-0 items-center justify-center border-b border-[#222] bg-[#353535] font-['Open_Sans',sans-serif] text-[13px] font-bold tracking-[-0.35px] text-[#f2f2f2]">
        *fb-d4g-module8-eth — QGIS
        <div className="absolute right-[10px] flex items-center">
          <span className="mt-[6px] mr-[27px] h-[2px] w-[7px] bg-white" />
          <span className="mr-[21px] h-[6px] w-[6px] border-2 border-white" />
          <svg width="18" height="18" viewBox="0 0 18 18"><circle cx="9" cy="9" r="9" fill="#e9642c" /><path d="M6 6l6 6M12 6l-6 6" stroke="#fff" strokeWidth="1.800" /></svg>
        </div>
      </div>
      <div className="flex h-[22px] shrink-0 items-center gap-[15.1px] border-b border-[#cfcfcf] pl-[10px]">
        {menus.map(([a, b, c]) => <span key={a + b + c}>{a}<span className="underline underline-offset-2">{b}</span>{c}</span>)}
      </div>
      <TopBar />
      <EditBar />
      <div className="flex h-[912px] shrink-0">
        <SideBar />
        <LayersPanel />
        <MapView />
        <div className="flex w-0 items-center"><svg width="4" height="18" viewBox="0 0 4 18" className="mt-[234px] shrink-0"><path d="M1 0v18M3 1v17" stroke="#aaa" strokeDasharray="1 2" /></svg></div>
        <StylingPanel />
      </div>
      <StatusBar />
    </div>
  );
}
